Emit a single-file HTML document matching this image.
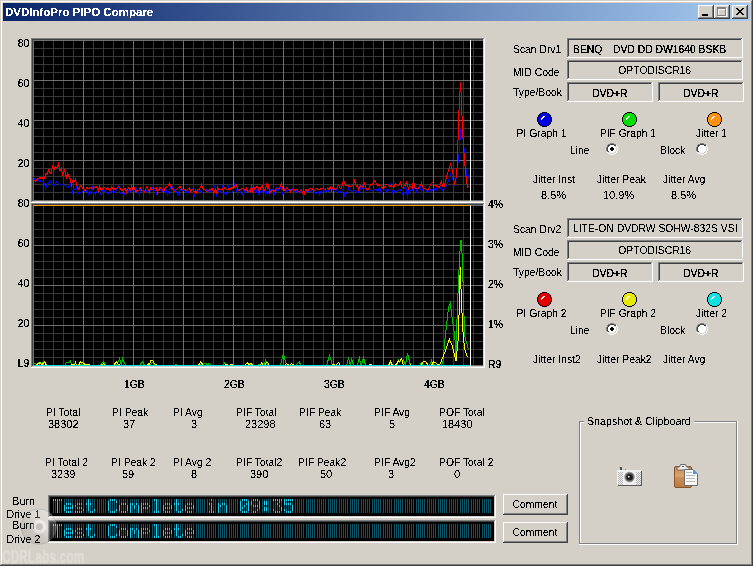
<!DOCTYPE html>
<html><head><meta charset="utf-8"><style>
html,body{margin:0;padding:0;}
body{width:753px;height:566px;overflow:hidden;background:#d4d0c8;position:relative;font-family:"Liberation Sans",sans-serif;font-size:11px;}
.t{position:absolute;line-height:12px;white-space:pre;color:#000;}
.r{position:absolute;}
.c{filter:url(#crisp);}
.c2{filter:url(#crisp2);}
svg{position:absolute;left:0;top:0;}
</style></head><body>
<svg width="0" height="0" style="position:absolute"><filter id="crisp" x="0" y="0" width="100%" height="100%"><feComponentTransfer><feFuncA type="discrete" tableValues="0 0 0 0 0 0 0 0 0 1 1 1 1 1 1 1 1 1 1 1"/></feComponentTransfer></filter><filter id="crisp2" x="0" y="0" width="100%" height="100%"><feComponentTransfer><feFuncA type="discrete" tableValues="0 0 0 0 0 0 1 1 1 1 1 1 1 1 1 1 1 1 1 1"/></feComponentTransfer></filter></svg>
<div class="r" style="left:0px;top:0px;width:753px;height:1px;background:#d4d0c8"></div>
<div class="r" style="left:0px;top:0px;width:1px;height:566px;background:#d4d0c8"></div>
<div class="r" style="left:1px;top:1px;width:751px;height:1px;background:#ffffff"></div>
<div class="r" style="left:1px;top:1px;width:1px;height:563px;background:#ffffff"></div>
<div class="r" style="left:752px;top:0px;width:1px;height:566px;background:#404040"></div>
<div class="r" style="left:0px;top:565px;width:753px;height:1px;background:#404040"></div>
<div class="r" style="left:751px;top:1px;width:1px;height:564px;background:#808080"></div>
<div class="r" style="left:1px;top:564px;width:751px;height:1px;background:#808080"></div>
<div class="r" style="left:3px;top:3px;width:747px;height:18px;background:linear-gradient(to right,#0a246a,#a6caf0)"></div>
<div class="t c" style="left:5px;top:6px;font-weight:bold;color:#fff;"><span style="display:inline-block;transform:scaleX(1.045);transform-origin:0 0">DVDInfoPro PIPO Compare</span></div>
<div class="r" style="left:698px;top:5px;width:16px;height:14px;background:#d4d0c8"></div>
<div class="r" style="left:698px;top:5px;width:16px;height:1px;background:#ffffff"></div>
<div class="r" style="left:698px;top:5px;width:1px;height:14px;background:#ffffff"></div>
<div class="r" style="left:698px;top:18px;width:16px;height:1px;background:#404040"></div>
<div class="r" style="left:713px;top:5px;width:1px;height:14px;background:#404040"></div>
<div class="r" style="left:699px;top:17px;width:14px;height:1px;background:#808080"></div>
<div class="r" style="left:712px;top:6px;width:1px;height:12px;background:#808080"></div>
<div class="r" style="left:714px;top:5px;width:16px;height:14px;background:#d4d0c8"></div>
<div class="r" style="left:714px;top:5px;width:16px;height:1px;background:#ffffff"></div>
<div class="r" style="left:714px;top:5px;width:1px;height:14px;background:#ffffff"></div>
<div class="r" style="left:714px;top:18px;width:16px;height:1px;background:#404040"></div>
<div class="r" style="left:729px;top:5px;width:1px;height:14px;background:#404040"></div>
<div class="r" style="left:715px;top:17px;width:14px;height:1px;background:#808080"></div>
<div class="r" style="left:728px;top:6px;width:1px;height:12px;background:#808080"></div>
<div class="r" style="left:732px;top:5px;width:16px;height:14px;background:#d4d0c8"></div>
<div class="r" style="left:732px;top:5px;width:16px;height:1px;background:#ffffff"></div>
<div class="r" style="left:732px;top:5px;width:1px;height:14px;background:#ffffff"></div>
<div class="r" style="left:732px;top:18px;width:16px;height:1px;background:#404040"></div>
<div class="r" style="left:747px;top:5px;width:1px;height:14px;background:#404040"></div>
<div class="r" style="left:733px;top:17px;width:14px;height:1px;background:#808080"></div>
<div class="r" style="left:746px;top:6px;width:1px;height:12px;background:#808080"></div>
<div class="r" style="left:702px;top:14px;width:6px;height:2px;background:#000"></div>
<div class="r" style="left:718px;top:8px;width:9px;height:2px;background:#fff"></div>
<div class="r" style="left:718px;top:8px;width:1px;height:9px;background:#fff"></div>
<div class="r" style="left:726px;top:8px;width:1px;height:9px;background:#fff"></div>
<div class="r" style="left:718px;top:16px;width:9px;height:1px;background:#fff"></div>
<div class="r" style="left:717px;top:7px;width:9px;height:2px;background:#808080"></div>
<div class="r" style="left:717px;top:7px;width:1px;height:9px;background:#808080"></div>
<div class="r" style="left:725px;top:7px;width:1px;height:9px;background:#808080"></div>
<div class="r" style="left:717px;top:15px;width:9px;height:1px;background:#808080"></div>
<div class="r" style="left:0;top:0"></div>
<div class="r" style="left:31px;top:38px;width:454px;height:1px;background:#808080"></div>
<div class="r" style="left:31px;top:38px;width:1px;height:165px;background:#808080"></div>
<div class="r" style="left:32px;top:39px;width:452px;height:1px;background:#404040"></div>
<div class="r" style="left:32px;top:39px;width:1px;height:163px;background:#404040"></div>
<div class="r" style="left:31px;top:202px;width:454px;height:1px;background:#ffffff"></div>
<div class="r" style="left:484px;top:38px;width:1px;height:165px;background:#ffffff"></div>
<div class="r" style="left:32px;top:201px;width:452px;height:1px;background:#d4d0c8"></div>
<div class="r" style="left:483px;top:39px;width:1px;height:163px;background:#d4d0c8"></div>
<div class="r" style="left:33px;top:40px;width:450px;height:161px;background:#000"></div>
<div class="r" style="left:31px;top:203px;width:454px;height:1px;background:#808080"></div>
<div class="r" style="left:31px;top:203px;width:1px;height:165px;background:#808080"></div>
<div class="r" style="left:32px;top:204px;width:452px;height:1px;background:#404040"></div>
<div class="r" style="left:32px;top:204px;width:1px;height:163px;background:#404040"></div>
<div class="r" style="left:31px;top:367px;width:454px;height:1px;background:#ffffff"></div>
<div class="r" style="left:484px;top:203px;width:1px;height:165px;background:#ffffff"></div>
<div class="r" style="left:32px;top:366px;width:452px;height:1px;background:#d4d0c8"></div>
<div class="r" style="left:483px;top:204px;width:1px;height:163px;background:#d4d0c8"></div>
<div class="r" style="left:33px;top:205px;width:450px;height:161px;background:#000"></div>
<svg width="753" height="566" shape-rendering="crispEdges"><rect x="43" y="40" width="1" height="161" fill="#383838"/><rect x="53" y="40" width="1" height="161" fill="#383838"/><rect x="63" y="40" width="1" height="161" fill="#383838"/><rect x="73" y="40" width="1" height="161" fill="#383838"/><rect x="93" y="40" width="1" height="161" fill="#383838"/><rect x="103" y="40" width="1" height="161" fill="#383838"/><rect x="113" y="40" width="1" height="161" fill="#383838"/><rect x="123" y="40" width="1" height="161" fill="#383838"/><rect x="143" y="40" width="1" height="161" fill="#383838"/><rect x="153" y="40" width="1" height="161" fill="#383838"/><rect x="163" y="40" width="1" height="161" fill="#383838"/><rect x="173" y="40" width="1" height="161" fill="#383838"/><rect x="193" y="40" width="1" height="161" fill="#383838"/><rect x="203" y="40" width="1" height="161" fill="#383838"/><rect x="213" y="40" width="1" height="161" fill="#383838"/><rect x="223" y="40" width="1" height="161" fill="#383838"/><rect x="243" y="40" width="1" height="161" fill="#383838"/><rect x="253" y="40" width="1" height="161" fill="#383838"/><rect x="263" y="40" width="1" height="161" fill="#383838"/><rect x="273" y="40" width="1" height="161" fill="#383838"/><rect x="293" y="40" width="1" height="161" fill="#383838"/><rect x="303" y="40" width="1" height="161" fill="#383838"/><rect x="313" y="40" width="1" height="161" fill="#383838"/><rect x="323" y="40" width="1" height="161" fill="#383838"/><rect x="343" y="40" width="1" height="161" fill="#383838"/><rect x="353" y="40" width="1" height="161" fill="#383838"/><rect x="363" y="40" width="1" height="161" fill="#383838"/><rect x="373" y="40" width="1" height="161" fill="#383838"/><rect x="393" y="40" width="1" height="161" fill="#383838"/><rect x="403" y="40" width="1" height="161" fill="#383838"/><rect x="413" y="40" width="1" height="161" fill="#383838"/><rect x="423" y="40" width="1" height="161" fill="#383838"/><rect x="443" y="40" width="1" height="161" fill="#383838"/><rect x="453" y="40" width="1" height="161" fill="#383838"/><rect x="463" y="40" width="1" height="161" fill="#383838"/><rect x="473" y="40" width="1" height="161" fill="#383838"/><rect x="33" y="48" width="450" height="1" fill="#383838"/><rect x="33" y="56" width="450" height="1" fill="#383838"/><rect x="33" y="64" width="450" height="1" fill="#383838"/><rect x="33" y="72" width="450" height="1" fill="#383838"/><rect x="33" y="88" width="450" height="1" fill="#383838"/><rect x="33" y="96" width="450" height="1" fill="#383838"/><rect x="33" y="104" width="450" height="1" fill="#383838"/><rect x="33" y="112" width="450" height="1" fill="#383838"/><rect x="33" y="128" width="450" height="1" fill="#383838"/><rect x="33" y="136" width="450" height="1" fill="#383838"/><rect x="33" y="144" width="450" height="1" fill="#383838"/><rect x="33" y="152" width="450" height="1" fill="#383838"/><rect x="33" y="168" width="450" height="1" fill="#383838"/><rect x="33" y="176" width="450" height="1" fill="#383838"/><rect x="33" y="184" width="450" height="1" fill="#383838"/><rect x="33" y="192" width="450" height="1" fill="#383838"/><rect x="33" y="40" width="1" height="161" fill="#707070"/><rect x="83" y="40" width="1" height="161" fill="#707070"/><rect x="133" y="40" width="1" height="161" fill="#707070"/><rect x="183" y="40" width="1" height="161" fill="#707070"/><rect x="233" y="40" width="1" height="161" fill="#707070"/><rect x="283" y="40" width="1" height="161" fill="#707070"/><rect x="333" y="40" width="1" height="161" fill="#707070"/><rect x="383" y="40" width="1" height="161" fill="#707070"/><rect x="433" y="40" width="1" height="161" fill="#707070"/><rect x="33" y="40" width="450" height="1" fill="#707070"/><rect x="33" y="80" width="450" height="1" fill="#707070"/><rect x="33" y="120" width="450" height="1" fill="#707070"/><rect x="33" y="160" width="450" height="1" fill="#707070"/><rect x="33" y="200" width="450" height="1" fill="#707070"/><rect x="43" y="205" width="1" height="161" fill="#383838"/><rect x="53" y="205" width="1" height="161" fill="#383838"/><rect x="63" y="205" width="1" height="161" fill="#383838"/><rect x="73" y="205" width="1" height="161" fill="#383838"/><rect x="93" y="205" width="1" height="161" fill="#383838"/><rect x="103" y="205" width="1" height="161" fill="#383838"/><rect x="113" y="205" width="1" height="161" fill="#383838"/><rect x="123" y="205" width="1" height="161" fill="#383838"/><rect x="143" y="205" width="1" height="161" fill="#383838"/><rect x="153" y="205" width="1" height="161" fill="#383838"/><rect x="163" y="205" width="1" height="161" fill="#383838"/><rect x="173" y="205" width="1" height="161" fill="#383838"/><rect x="193" y="205" width="1" height="161" fill="#383838"/><rect x="203" y="205" width="1" height="161" fill="#383838"/><rect x="213" y="205" width="1" height="161" fill="#383838"/><rect x="223" y="205" width="1" height="161" fill="#383838"/><rect x="243" y="205" width="1" height="161" fill="#383838"/><rect x="253" y="205" width="1" height="161" fill="#383838"/><rect x="263" y="205" width="1" height="161" fill="#383838"/><rect x="273" y="205" width="1" height="161" fill="#383838"/><rect x="293" y="205" width="1" height="161" fill="#383838"/><rect x="303" y="205" width="1" height="161" fill="#383838"/><rect x="313" y="205" width="1" height="161" fill="#383838"/><rect x="323" y="205" width="1" height="161" fill="#383838"/><rect x="343" y="205" width="1" height="161" fill="#383838"/><rect x="353" y="205" width="1" height="161" fill="#383838"/><rect x="363" y="205" width="1" height="161" fill="#383838"/><rect x="373" y="205" width="1" height="161" fill="#383838"/><rect x="393" y="205" width="1" height="161" fill="#383838"/><rect x="403" y="205" width="1" height="161" fill="#383838"/><rect x="413" y="205" width="1" height="161" fill="#383838"/><rect x="423" y="205" width="1" height="161" fill="#383838"/><rect x="443" y="205" width="1" height="161" fill="#383838"/><rect x="453" y="205" width="1" height="161" fill="#383838"/><rect x="463" y="205" width="1" height="161" fill="#383838"/><rect x="473" y="205" width="1" height="161" fill="#383838"/><rect x="33" y="213" width="450" height="1" fill="#383838"/><rect x="33" y="221" width="450" height="1" fill="#383838"/><rect x="33" y="229" width="450" height="1" fill="#383838"/><rect x="33" y="237" width="450" height="1" fill="#383838"/><rect x="33" y="253" width="450" height="1" fill="#383838"/><rect x="33" y="261" width="450" height="1" fill="#383838"/><rect x="33" y="269" width="450" height="1" fill="#383838"/><rect x="33" y="277" width="450" height="1" fill="#383838"/><rect x="33" y="293" width="450" height="1" fill="#383838"/><rect x="33" y="301" width="450" height="1" fill="#383838"/><rect x="33" y="309" width="450" height="1" fill="#383838"/><rect x="33" y="317" width="450" height="1" fill="#383838"/><rect x="33" y="333" width="450" height="1" fill="#383838"/><rect x="33" y="341" width="450" height="1" fill="#383838"/><rect x="33" y="349" width="450" height="1" fill="#383838"/><rect x="33" y="357" width="450" height="1" fill="#383838"/><rect x="33" y="205" width="1" height="161" fill="#707070"/><rect x="83" y="205" width="1" height="161" fill="#707070"/><rect x="133" y="205" width="1" height="161" fill="#707070"/><rect x="183" y="205" width="1" height="161" fill="#707070"/><rect x="233" y="205" width="1" height="161" fill="#707070"/><rect x="283" y="205" width="1" height="161" fill="#707070"/><rect x="333" y="205" width="1" height="161" fill="#707070"/><rect x="383" y="205" width="1" height="161" fill="#707070"/><rect x="433" y="205" width="1" height="161" fill="#707070"/><rect x="33" y="205" width="450" height="1" fill="#707070"/><rect x="33" y="245" width="450" height="1" fill="#707070"/><rect x="33" y="285" width="450" height="1" fill="#707070"/><rect x="33" y="325" width="450" height="1" fill="#707070"/><rect x="33" y="365" width="450" height="1" fill="#707070"/></svg>
<svg width="753" height="566"><g shape-rendering="crispEdges"><polyline points="33.5,177.5 35.5,180.5 37.5,179.5 38.5,179.5 39.5,181.5 41.5,180.5 42.5,181.5 44.5,183.5 45.5,188.5 46.5,186.5 48.5,182.5 50.5,180.5 51.5,185.5 52.5,184.5 54.5,185.5 56.5,181.5 58.5,183.5 59.5,184.5 61.5,184.5 63.5,184.5 65.5,186.5 67.5,186.5 68.5,187.5 69.5,185.5 70.5,183.5 72.5,192.5 73.5,189.5 75.5,189.5 76.5,185.5 77.5,194.5 79.5,191.5 80.5,192.5 81.5,192.5 83.5,190.5 85.5,191.5 87.5,190.5 88.5,193.5 89.5,190.5 90.5,192.5 92.5,186.5 93.5,193.5 94.5,192.5 95.5,194.5 96.5,191.5 97.5,190.5 98.5,190.5 100.5,194.5 101.5,194.5 102.5,190.5 104.5,190.5 105.5,192.5 106.5,192.5 107.5,193.5 109.5,192.5 110.5,191.5 111.5,191.5 113.5,192.5 114.5,192.5 115.5,189.5 116.5,190.5 118.5,186.5 120.5,193.5 122.5,193.5 123.5,194.5 125.5,193.5 126.5,191.5 127.5,186.5 128.5,192.5 130.5,191.5 131.5,191.5 132.5,190.5 134.5,191.5 136.5,188.5 137.5,191.5 138.5,192.5 139.5,194.5 140.5,189.5 141.5,191.5 143.5,189.5 144.5,191.5 145.5,192.5 146.5,191.5 147.5,189.5 148.5,191.5 150.5,190.5 151.5,190.5 152.5,188.5 153.5,190.5 154.5,189.5 156.5,193.5 157.5,190.5 159.5,190.5 160.5,189.5 161.5,192.5 162.5,191.5 164.5,190.5 165.5,193.5 166.5,190.5 167.5,194.5 169.5,190.5 170.5,186.5 171.5,189.5 173.5,185.5 174.5,191.5 175.5,192.5 176.5,191.5 177.5,194.5 178.5,195.5 179.5,188.5 180.5,190.5 181.5,190.5 183.5,190.5 185.5,190.5 186.5,192.5 187.5,193.5 188.5,191.5 190.5,191.5 192.5,188.5 194.5,195.5 196.5,190.5 198.5,191.5 199.5,190.5 201.5,191.5 202.5,192.5 204.5,189.5 205.5,190.5 206.5,189.5 207.5,191.5 209.5,191.5 211.5,190.5 212.5,188.5 214.5,185.5 216.5,196.5 217.5,188.5 218.5,191.5 219.5,192.5 220.5,192.5 221.5,190.5 222.5,185.5 223.5,190.5 224.5,193.5 226.5,194.5 228.5,185.5 229.5,192.5 231.5,192.5 232.5,191.5 233.5,191.5 234.5,183.5 236.5,190.5 237.5,193.5 238.5,189.5 239.5,189.5 241.5,194.5 242.5,194.5 244.5,190.5 246.5,192.5 247.5,191.5 249.5,190.5 251.5,190.5 252.5,187.5 254.5,190.5 256.5,192.5 257.5,185.5 258.5,194.5 259.5,191.5 261.5,192.5 262.5,190.5 263.5,190.5 264.5,190.5 265.5,194.5 267.5,190.5 269.5,194.5 270.5,189.5 271.5,189.5 272.5,189.5 273.5,191.5 274.5,193.5 276.5,187.5 277.5,193.5 278.5,188.5 280.5,187.5 281.5,190.5 282.5,194.5 283.5,193.5 284.5,189.5 285.5,191.5 286.5,191.5 287.5,189.5 289.5,190.5 291.5,189.5 293.5,188.5 295.5,192.5 296.5,190.5 298.5,192.5 299.5,191.5 301.5,190.5 302.5,191.5 303.5,192.5 304.5,192.5 305.5,192.5 307.5,189.5 308.5,191.5 309.5,191.5 310.5,191.5 312.5,190.5 313.5,191.5 315.5,193.5 317.5,192.5 318.5,191.5 319.5,194.5 321.5,190.5 322.5,190.5 323.5,190.5 324.5,191.5 326.5,190.5 327.5,192.5 329.5,189.5 330.5,189.5 331.5,188.5 333.5,190.5 335.5,192.5 336.5,189.5 338.5,191.5 339.5,193.5 341.5,190.5 343.5,188.5 344.5,195.5 345.5,193.5 347.5,192.5 348.5,188.5 349.5,190.5 350.5,190.5 351.5,191.5 352.5,191.5 353.5,191.5 354.5,190.5 355.5,191.5 357.5,192.5 359.5,191.5 360.5,188.5 361.5,181.5 362.5,188.5 363.5,187.5 364.5,188.5 366.5,190.5 368.5,189.5 369.5,190.5 370.5,190.5 371.5,189.5 372.5,190.5 373.5,189.5 374.5,189.5 376.5,189.5 377.5,191.5 379.5,187.5 380.5,191.5 382.5,192.5 384.5,189.5 386.5,191.5 387.5,189.5 388.5,190.5 390.5,183.5 392.5,192.5 393.5,190.5 395.5,191.5 396.5,191.5 397.5,191.5 399.5,189.5 401.5,190.5 402.5,194.5 403.5,190.5 405.5,185.5 407.5,198.5 408.5,190.5 409.5,190.5 410.5,189.5 411.5,191.5 413.5,187.5 414.5,188.5 415.5,183.5 416.5,192.5 417.5,188.5 419.5,186.5 420.5,186.5 421.5,192.5 423.5,187.5 424.5,188.5 425.5,189.5 427.5,192.5 428.5,191.5 430.5,189.5 431.5,191.5 433.5,188.5 435.5,189.5 436.5,190.5 437.5,186.5 439.5,186.5 441.5,189.5 442.5,190.5 443.5,187.5 444.5,188.5 446.5,186.5 448.5,180.5 450.5,174.5 452.5,178.5 454.5,184.5 456.5,176.5 458.5,158.5 459.5,150.5 460.5,130.5 461.5,127.5 462.5,134.5 463.5,142.5 465.5,165.5 467.5,180.5 468.5,175.5" fill="none" stroke="#0000ff" stroke-width="1" stroke-linejoin="miter"/><polyline points="33.5,179.5 35.5,181.5 36.5,180.5 37.5,178.5 38.5,178.5 39.5,177.5 41.5,178.5 43.5,177.5 44.5,178.5 45.5,173.5 46.5,174.5 48.5,170.5 49.5,172.5 51.5,173.5 52.5,165.5 53.5,170.5 55.5,166.5 56.5,167.5 57.5,167.5 58.5,162.5 59.5,170.5 60.5,170.5 61.5,168.5 62.5,174.5 64.5,170.5 66.5,177.5 67.5,173.5 68.5,175.5 70.5,179.5 71.5,186.5 72.5,180.5 74.5,181.5 75.5,179.5 77.5,188.5 78.5,189.5 80.5,185.5 82.5,187.5 83.5,189.5 85.5,190.5 86.5,187.5 88.5,188.5 90.5,187.5 92.5,188.5 94.5,187.5 96.5,186.5 98.5,190.5 99.5,186.5 101.5,190.5 102.5,189.5 103.5,187.5 104.5,187.5 106.5,189.5 107.5,187.5 109.5,190.5 110.5,190.5 111.5,186.5 113.5,189.5 115.5,188.5 116.5,188.5 118.5,186.5 120.5,188.5 121.5,190.5 122.5,189.5 123.5,191.5 124.5,188.5 125.5,188.5 126.5,192.5 128.5,187.5 130.5,190.5 131.5,185.5 133.5,191.5 134.5,187.5 135.5,191.5 137.5,190.5 138.5,190.5 140.5,187.5 141.5,190.5 142.5,190.5 144.5,192.5 146.5,186.5 147.5,187.5 149.5,192.5 150.5,187.5 152.5,189.5 153.5,188.5 155.5,188.5 156.5,187.5 157.5,193.5 158.5,191.5 159.5,187.5 161.5,188.5 162.5,189.5 163.5,191.5 165.5,187.5 167.5,186.5 168.5,185.5 169.5,183.5 171.5,187.5 172.5,189.5 174.5,191.5 176.5,189.5 178.5,187.5 180.5,186.5 181.5,189.5 182.5,189.5 184.5,189.5 186.5,190.5 188.5,188.5 189.5,187.5 190.5,191.5 191.5,189.5 192.5,189.5 194.5,192.5 195.5,190.5 196.5,192.5 197.5,189.5 199.5,189.5 201.5,184.5 202.5,188.5 204.5,189.5 206.5,191.5 207.5,190.5 208.5,190.5 210.5,189.5 212.5,188.5 213.5,193.5 215.5,189.5 216.5,192.5 217.5,187.5 218.5,189.5 219.5,189.5 221.5,189.5 222.5,188.5 223.5,190.5 224.5,187.5 226.5,189.5 227.5,189.5 229.5,188.5 230.5,189.5 231.5,187.5 233.5,188.5 234.5,186.5 236.5,184.5 237.5,189.5 238.5,190.5 240.5,189.5 242.5,188.5 243.5,188.5 245.5,190.5 246.5,188.5 247.5,192.5 249.5,190.5 250.5,191.5 251.5,184.5 252.5,192.5 253.5,184.5 254.5,189.5 255.5,188.5 256.5,186.5 257.5,186.5 258.5,188.5 259.5,192.5 260.5,187.5 262.5,185.5 263.5,190.5 265.5,189.5 266.5,184.5 267.5,187.5 268.5,184.5 269.5,192.5 270.5,192.5 271.5,190.5 272.5,190.5 274.5,191.5 275.5,189.5 276.5,188.5 277.5,188.5 279.5,188.5 281.5,182.5 282.5,189.5 283.5,189.5 285.5,190.5 286.5,187.5 288.5,189.5 289.5,189.5 290.5,191.5 291.5,189.5 293.5,189.5 295.5,190.5 296.5,189.5 298.5,191.5 299.5,191.5 301.5,189.5 302.5,192.5 303.5,190.5 304.5,193.5 305.5,189.5 306.5,189.5 307.5,191.5 309.5,188.5 310.5,188.5 311.5,189.5 312.5,188.5 313.5,191.5 315.5,189.5 316.5,188.5 318.5,189.5 319.5,189.5 321.5,188.5 323.5,188.5 324.5,189.5 326.5,188.5 327.5,187.5 328.5,189.5 330.5,186.5 331.5,190.5 332.5,187.5 333.5,187.5 334.5,189.5 335.5,189.5 336.5,188.5 338.5,185.5 340.5,188.5 341.5,188.5 343.5,179.5 345.5,185.5 347.5,185.5 349.5,186.5 351.5,186.5 352.5,185.5 353.5,186.5 354.5,179.5 356.5,186.5 357.5,185.5 358.5,189.5 360.5,185.5 361.5,186.5 362.5,187.5 364.5,183.5 366.5,189.5 368.5,189.5 370.5,184.5 372.5,184.5 373.5,182.5 374.5,180.5 376.5,183.5 377.5,185.5 379.5,184.5 381.5,186.5 382.5,188.5 383.5,189.5 385.5,184.5 387.5,184.5 388.5,185.5 389.5,186.5 391.5,185.5 392.5,186.5 393.5,187.5 395.5,183.5 396.5,184.5 397.5,185.5 398.5,185.5 399.5,184.5 400.5,182.5 401.5,186.5 402.5,187.5 404.5,185.5 405.5,185.5 406.5,181.5 407.5,185.5 408.5,188.5 409.5,185.5 411.5,187.5 412.5,188.5 413.5,177.5 414.5,187.5 415.5,188.5 417.5,188.5 419.5,187.5 421.5,182.5 422.5,187.5 423.5,188.5 425.5,188.5 427.5,190.5 429.5,187.5 430.5,184.5 432.5,182.5 434.5,185.5 435.5,185.5 437.5,186.5 439.5,187.5 440.5,184.5 441.5,180.5 442.5,186.5 443.5,183.5 444.5,185.5 446.5,176.5 448.5,170.5 450.5,164.5 452.5,170.5 454.5,184.5 456.5,175.5 457.5,160.5 458.5,120.5 459.5,100.5 460.5,82.5 461.5,100.5 462.5,130.5 464.5,160.5 466.5,180.5 467.5,187.5 468.5,186.5" fill="none" stroke="#ff0000" stroke-width="1" stroke-linejoin="miter"/></g><rect x="33" y="205" width="437" height="1" fill="#ff9900"/><g shape-rendering="crispEdges"><polyline points="33.5,362.5 36.5,364.5 38.5,362.5 40.5,365.5 42.5,362.5 43.5,365.5 46.5,365.5 48.5,365.5 49.5,365.5 50.5,365.5 51.5,365.5 53.5,365.5 55.5,365.5 56.5,365.5 59.5,365.5 61.5,365.5 64.5,365.5 66.5,362.5 68.5,362.5 70.5,360.5 71.5,365.5 73.5,365.5 75.5,362.5 76.5,365.5 79.5,364.5 80.5,365.5 81.5,363.5 84.5,365.5 87.5,364.5 89.5,365.5 91.5,365.5 94.5,365.5 95.5,365.5 97.5,365.5 99.5,365.5 100.5,364.5 103.5,361.5 105.5,365.5 107.5,365.5 110.5,365.5 113.5,365.5 114.5,365.5 117.5,363.5 119.5,358.5 121.5,365.5 122.5,358.5 125.5,365.5 126.5,365.5 127.5,365.5 129.5,365.5 131.5,365.5 134.5,365.5 136.5,365.5 137.5,365.5 139.5,365.5 142.5,361.5 144.5,365.5 145.5,365.5 147.5,365.5 149.5,365.5 152.5,362.5 155.5,365.5 157.5,365.5 159.5,365.5 161.5,365.5 163.5,365.5 165.5,365.5 167.5,365.5 169.5,365.5 171.5,365.5 174.5,365.5 175.5,364.5 177.5,365.5 180.5,365.5 182.5,365.5 185.5,365.5 188.5,365.5 190.5,365.5 192.5,365.5 193.5,365.5 195.5,365.5 197.5,365.5 200.5,365.5 201.5,363.5 202.5,364.5 205.5,363.5 207.5,364.5 209.5,363.5 211.5,365.5 213.5,365.5 214.5,365.5 215.5,365.5 218.5,365.5 220.5,365.5 222.5,365.5 223.5,365.5 224.5,362.5 226.5,364.5 228.5,365.5 230.5,365.5 232.5,365.5 234.5,365.5 235.5,365.5 238.5,365.5 239.5,365.5 242.5,365.5 243.5,365.5 244.5,365.5 247.5,365.5 248.5,365.5 249.5,363.5 252.5,365.5 254.5,365.5 257.5,365.5 260.5,363.5 261.5,362.5 262.5,365.5 264.5,365.5 265.5,359.5 267.5,365.5 268.5,365.5 270.5,365.5 272.5,365.5 274.5,365.5 276.5,365.5 278.5,365.5 280.5,365.5 283.5,353.5 285.5,362.5 288.5,365.5 290.5,365.5 293.5,365.5 295.5,365.5 297.5,363.5 299.5,361.5 300.5,365.5 302.5,365.5 304.5,365.5 305.5,365.5 308.5,365.5 311.5,365.5 313.5,365.5 315.5,365.5 318.5,365.5 321.5,365.5 324.5,365.5 326.5,365.5 329.5,355.5 330.5,358.5 332.5,365.5 334.5,365.5 335.5,365.5 337.5,365.5 340.5,365.5 343.5,365.5 345.5,365.5 346.5,365.5 348.5,358.5 350.5,365.5 351.5,358.5 353.5,365.5 355.5,365.5 357.5,365.5 359.5,356.5 360.5,365.5 361.5,364.5 363.5,357.5 365.5,365.5 366.5,365.5 369.5,365.5 372.5,365.5 374.5,365.5 377.5,365.5 380.5,365.5 382.5,365.5 383.5,365.5 386.5,365.5 388.5,365.5 391.5,362.5 392.5,365.5 395.5,365.5 397.5,364.5 398.5,360.5 399.5,362.5 401.5,359.5 402.5,360.5 403.5,359.5 405.5,365.5 407.5,353.5 410.5,365.5 413.5,365.5 414.5,365.5 417.5,365.5 419.5,365.5 421.5,362.5 423.5,365.5 425.5,365.5 427.5,365.5 429.5,365.5 431.5,360.5 432.5,364.5 433.5,364.5 436.5,365.5 437.5,365.5 440.5,365.5 441.5,365.5 443.0,361.0 445.0,339.0 448.6,307.0 450.3,303.0 452.3,319.0 454.8,336.0 456.0,358.0 457.2,312.0 459.7,255.0 461.0,240.0 462.2,255.0 463.4,294.0 464.6,336.0 467.0,344.0 468.4,349.0" fill="none" stroke="#00c000" stroke-width="1" stroke-linejoin="miter"/><polyline points="33.5,365.5 35.5,365.5 36.5,364.5 38.5,363.5 40.5,362.5 41.5,365.5 44.5,361.5 46.5,365.5 48.5,365.5 50.5,365.5 52.5,365.5 54.5,365.5 56.5,365.5 58.5,365.5 60.5,365.5 61.5,365.5 64.5,365.5 67.5,365.5 70.5,365.5 72.5,364.5 74.5,365.5 75.5,362.5 76.5,365.5 78.5,365.5 80.5,361.5 83.5,363.5 85.5,364.5 88.5,364.5 90.5,365.5 91.5,365.5 94.5,365.5 96.5,365.5 99.5,365.5 100.5,365.5 103.5,363.5 105.5,365.5 106.5,365.5 109.5,365.5 110.5,365.5 112.5,365.5 113.5,365.5 116.5,361.5 117.5,363.5 120.5,365.5 122.5,365.5 124.5,365.5 126.5,365.5 128.5,365.5 129.5,365.5 132.5,365.5 134.5,365.5 137.5,365.5 140.5,365.5 143.5,365.5 144.5,365.5 146.5,365.5 148.5,363.5 149.5,365.5 150.5,360.5 152.5,360.5 154.5,363.5 155.5,364.5 158.5,365.5 161.5,365.5 163.5,365.5 164.5,365.5 166.5,365.5 169.5,365.5 170.5,365.5 172.5,365.5 175.5,365.5 177.5,365.5 178.5,365.5 180.5,365.5 183.5,365.5 186.5,365.5 187.5,365.5 190.5,365.5 192.5,365.5 195.5,365.5 197.5,365.5 199.5,364.5 200.5,361.5 203.5,365.5 206.5,365.5 208.5,365.5 210.5,365.5 213.5,365.5 215.5,365.5 217.5,365.5 219.5,365.5 221.5,365.5 223.5,365.5 226.5,364.5 229.5,365.5 231.5,364.5 233.5,365.5 235.5,365.5 237.5,365.5 238.5,365.5 241.5,365.5 242.5,365.5 244.5,365.5 247.5,362.5 248.5,364.5 251.5,363.5 252.5,365.5 254.5,365.5 256.5,365.5 258.5,365.5 260.5,365.5 261.5,362.5 263.5,365.5 264.5,365.5 266.5,362.5 267.5,362.5 269.5,365.5 271.5,365.5 274.5,365.5 276.5,365.5 277.5,365.5 278.5,365.5 279.5,365.5 281.5,365.5 282.5,365.5 284.5,365.5 286.5,363.5 289.5,365.5 291.5,363.5 294.5,365.5 296.5,365.5 298.5,365.5 301.5,365.5 303.5,365.5 305.5,365.5 308.5,365.5 310.5,365.5 311.5,365.5 314.5,365.5 317.5,365.5 319.5,365.5 321.5,365.5 323.5,365.5 325.5,365.5 327.5,365.5 330.5,365.5 333.5,364.5 335.5,365.5 338.5,362.5 340.5,365.5 341.5,365.5 343.5,365.5 346.5,365.5 348.5,365.5 351.5,365.5 354.5,365.5 357.5,365.5 359.5,365.5 361.5,365.5 364.5,365.5 365.5,365.5 368.5,365.5 369.5,364.5 370.5,364.5 372.5,365.5 374.5,365.5 376.5,365.5 377.5,365.5 380.5,365.5 381.5,365.5 382.5,365.5 385.5,365.5 388.5,365.5 390.5,361.5 392.5,365.5 394.5,365.5 396.5,364.5 398.5,360.5 399.5,361.5 401.5,358.5 403.5,365.5 404.5,365.5 406.5,365.5 407.5,365.5 408.5,365.5 409.5,365.5 410.5,364.5 411.5,365.5 413.5,365.5 414.5,365.5 416.5,365.5 418.5,365.5 420.5,365.5 423.5,361.5 425.5,361.5 428.5,365.5 431.5,365.5 432.5,363.5 433.5,361.5 436.5,363.5 439.5,365.5 441.0,362.0 444.9,352.0 449.3,339.0 452.3,346.0 456.0,361.0 458.5,336.0 460.2,267.0 461.2,294.0 462.7,329.0 464.6,349.0 467.0,356.0 468.4,357.5" fill="none" stroke="#ffff00" stroke-width="1" stroke-linejoin="miter"/></g><rect x="33" y="365" width="437" height="1" fill="#00e0e0"/><rect x="470" y="40" width="1" height="161" fill="#ffffff"/><rect x="470" y="205" width="1" height="161" fill="#ffffff"/></svg>
<div class="t c" style="left:0px;top:37px;width:29px;text-align:right;filter:url(#crisp2)"><span style="display:inline-block;transform:scaleX(0.94);transform-origin:100% 0">80</span></div>
<div class="t c" style="left:0px;top:77px;width:29px;text-align:right;filter:url(#crisp2)"><span style="display:inline-block;transform:scaleX(0.94);transform-origin:100% 0">60</span></div>
<div class="t c" style="left:0px;top:117px;width:29px;text-align:right;filter:url(#crisp2)"><span style="display:inline-block;transform:scaleX(0.94);transform-origin:100% 0">40</span></div>
<div class="t c" style="left:0px;top:157px;width:29px;text-align:right;filter:url(#crisp2)"><span style="display:inline-block;transform:scaleX(0.94);transform-origin:100% 0">20</span></div>
<div class="t c" style="left:0px;top:197px;width:29px;text-align:right;filter:url(#crisp2)"><span style="display:inline-block;transform:scaleX(0.94);transform-origin:100% 0">80</span></div>
<div class="t c" style="left:0px;top:237px;width:29px;text-align:right;filter:url(#crisp2)"><span style="display:inline-block;transform:scaleX(0.94);transform-origin:100% 0">60</span></div>
<div class="t c" style="left:0px;top:277px;width:29px;text-align:right;filter:url(#crisp2)"><span style="display:inline-block;transform:scaleX(0.94);transform-origin:100% 0">40</span></div>
<div class="t c" style="left:0px;top:317px;width:29px;text-align:right;filter:url(#crisp2)"><span style="display:inline-block;transform:scaleX(0.94);transform-origin:100% 0">20</span></div>
<div class="t c" style="left:0px;top:357px;width:29px;text-align:right;filter:url(#crisp2)"><span style="display:inline-block;transform:scaleX(0.94);transform-origin:100% 0">L9</span></div>
<div class="t c" style="left:488px;top:198px;filter:url(#crisp2)"><span style="display:inline-block;transform:scaleX(0.94);transform-origin:0 0">4%</span></div>
<div class="t c" style="left:488px;top:238px;filter:url(#crisp2)"><span style="display:inline-block;transform:scaleX(0.94);transform-origin:0 0">3%</span></div>
<div class="t c" style="left:488px;top:278px;filter:url(#crisp2)"><span style="display:inline-block;transform:scaleX(0.94);transform-origin:0 0">2%</span></div>
<div class="t c" style="left:488px;top:318px;filter:url(#crisp2)"><span style="display:inline-block;transform:scaleX(0.94);transform-origin:0 0">1%</span></div>
<div class="t c" style="left:488px;top:358px;filter:url(#crisp2)"><span style="display:inline-block;transform:scaleX(0.94);transform-origin:0 0">R9</span></div>
<div class="t c" style="left:124px;top:378px;filter:url(#crisp2)"><span style="display:inline-block;transform:scaleX(0.94);transform-origin:0 0">1GB</span></div>
<div class="t c" style="left:224px;top:378px;filter:url(#crisp2)"><span style="display:inline-block;transform:scaleX(0.94);transform-origin:0 0">2GB</span></div>
<div class="t c" style="left:324px;top:378px;filter:url(#crisp2)"><span style="display:inline-block;transform:scaleX(0.94);transform-origin:0 0">3GB</span></div>
<div class="t c" style="left:424px;top:378px;filter:url(#crisp2)"><span style="display:inline-block;transform:scaleX(0.94);transform-origin:0 0">4GB</span></div>
<div class="t c" style="left:46px;top:406px;"><span style="display:inline-block;transform:scaleX(0.94);transform-origin:0 0">PI Total</span></div>
<div class="t c" style="left:48px;top:418px;"><span style="display:inline-block;transform:scaleX(1.0);transform-origin:0 0">38302</span></div>
<div class="t c" style="left:112px;top:406px;"><span style="display:inline-block;transform:scaleX(0.94);transform-origin:0 0">PI Peak</span></div>
<div class="t c" style="left:123px;top:418px;"><span style="display:inline-block;transform:scaleX(1.0);transform-origin:0 0">37</span></div>
<div class="t c" style="left:173px;top:406px;"><span style="display:inline-block;transform:scaleX(0.94);transform-origin:0 0">PI Avg</span></div>
<div class="t c" style="left:191px;top:418px;"><span style="display:inline-block;transform:scaleX(1.0);transform-origin:0 0">3</span></div>
<div class="t c" style="left:236px;top:406px;"><span style="display:inline-block;transform:scaleX(0.94);transform-origin:0 0">PIF Total</span></div>
<div class="t c" style="left:245px;top:418px;"><span style="display:inline-block;transform:scaleX(1.0);transform-origin:0 0">23298</span></div>
<div class="t c" style="left:299px;top:406px;"><span style="display:inline-block;transform:scaleX(0.94);transform-origin:0 0">PIF Peak</span></div>
<div class="t c" style="left:319px;top:418px;"><span style="display:inline-block;transform:scaleX(1.0);transform-origin:0 0">63</span></div>
<div class="t c" style="left:374px;top:406px;"><span style="display:inline-block;transform:scaleX(0.94);transform-origin:0 0">PIF Avg</span></div>
<div class="t c" style="left:389px;top:418px;"><span style="display:inline-block;transform:scaleX(1.0);transform-origin:0 0">5</span></div>
<div class="t c" style="left:439px;top:406px;"><span style="display:inline-block;transform:scaleX(0.94);transform-origin:0 0">POF Total</span></div>
<div class="t c" style="left:442px;top:418px;"><span style="display:inline-block;transform:scaleX(1.0);transform-origin:0 0">18430</span></div>
<div class="t c" style="left:45px;top:456px;"><span style="display:inline-block;transform:scaleX(0.94);transform-origin:0 0">PI Total 2</span></div>
<div class="t c" style="left:51px;top:468px;"><span style="display:inline-block;transform:scaleX(1.0);transform-origin:0 0">3239</span></div>
<div class="t c" style="left:111px;top:456px;"><span style="display:inline-block;transform:scaleX(0.94);transform-origin:0 0">PI Peak 2</span></div>
<div class="t c" style="left:122px;top:468px;"><span style="display:inline-block;transform:scaleX(1.0);transform-origin:0 0">59</span></div>
<div class="t c" style="left:173px;top:456px;"><span style="display:inline-block;transform:scaleX(0.94);transform-origin:0 0">PI Avg 2</span></div>
<div class="t c" style="left:191px;top:468px;"><span style="display:inline-block;transform:scaleX(1.0);transform-origin:0 0">8</span></div>
<div class="t c" style="left:236px;top:456px;"><span style="display:inline-block;transform:scaleX(0.94);transform-origin:0 0">PIF Total2</span></div>
<div class="t c" style="left:250px;top:468px;"><span style="display:inline-block;transform:scaleX(1.0);transform-origin:0 0">390</span></div>
<div class="t c" style="left:298px;top:456px;"><span style="display:inline-block;transform:scaleX(0.94);transform-origin:0 0">PIF Peak2</span></div>
<div class="t c" style="left:320px;top:468px;"><span style="display:inline-block;transform:scaleX(1.0);transform-origin:0 0">50</span></div>
<div class="t c" style="left:374px;top:456px;"><span style="display:inline-block;transform:scaleX(0.94);transform-origin:0 0">PIF Avg2</span></div>
<div class="t c" style="left:388px;top:468px;"><span style="display:inline-block;transform:scaleX(1.0);transform-origin:0 0">3</span></div>
<div class="t c" style="left:439px;top:456px;"><span style="display:inline-block;transform:scaleX(0.94);transform-origin:0 0">POF Total 2</span></div>
<div class="t c" style="left:454px;top:468px;"><span style="display:inline-block;transform:scaleX(1.0);transform-origin:0 0">0</span></div>
<svg width="753" height="566" shape-rendering="crispEdges"><path d="M736 8h1v1h-1zM737 8h1v1h-1zM742 8h1v1h-1zM743 8h1v1h-1zM737 9h1v1h-1zM738 9h1v1h-1zM741 9h1v1h-1zM742 9h1v1h-1zM738 10h1v1h-1zM739 10h1v1h-1zM740 10h1v1h-1zM741 10h1v1h-1zM739 11h1v1h-1zM740 11h1v1h-1zM738 12h1v1h-1zM739 12h1v1h-1zM740 12h1v1h-1zM741 12h1v1h-1zM737 13h1v1h-1zM738 13h1v1h-1zM741 13h1v1h-1zM742 13h1v1h-1zM736 14h1v1h-1zM737 14h1v1h-1zM742 14h1v1h-1zM743 14h1v1h-1z" fill="#000"/></svg>
<div class="t c" style="left:513px;top:43px;"><span style="display:inline-block;transform:scaleX(0.94);transform-origin:0 0">Scan Drv1</span></div>
<div class="t c" style="left:513px;top:66px;"><span style="display:inline-block;transform:scaleX(0.94);transform-origin:0 0">MID Code</span></div>
<div class="t c" style="left:513px;top:86px;"><span style="display:inline-block;transform:scaleX(0.94);transform-origin:0 0">Type/Book</span></div>
<div class="r" style="left:567px;top:38px;width:176px;height:1px;background:#808080"></div>
<div class="r" style="left:567px;top:38px;width:1px;height:20px;background:#808080"></div>
<div class="r" style="left:568px;top:39px;width:174px;height:1px;background:#404040"></div>
<div class="r" style="left:568px;top:39px;width:1px;height:18px;background:#404040"></div>
<div class="r" style="left:567px;top:57px;width:176px;height:1px;background:#ffffff"></div>
<div class="r" style="left:742px;top:38px;width:1px;height:20px;background:#ffffff"></div>
<div class="r" style="left:568px;top:56px;width:174px;height:1px;background:#d4d0c8"></div>
<div class="r" style="left:741px;top:39px;width:1px;height:18px;background:#d4d0c8"></div>
<div class="r" style="left:567px;top:60px;width:176px;height:1px;background:#808080"></div>
<div class="r" style="left:567px;top:60px;width:1px;height:20px;background:#808080"></div>
<div class="r" style="left:568px;top:61px;width:174px;height:1px;background:#404040"></div>
<div class="r" style="left:568px;top:61px;width:1px;height:18px;background:#404040"></div>
<div class="r" style="left:567px;top:79px;width:176px;height:1px;background:#ffffff"></div>
<div class="r" style="left:742px;top:60px;width:1px;height:20px;background:#ffffff"></div>
<div class="r" style="left:568px;top:78px;width:174px;height:1px;background:#d4d0c8"></div>
<div class="r" style="left:741px;top:61px;width:1px;height:18px;background:#d4d0c8"></div>
<div class="r" style="left:567px;top:82px;width:86px;height:1px;background:#808080"></div>
<div class="r" style="left:567px;top:82px;width:1px;height:20px;background:#808080"></div>
<div class="r" style="left:568px;top:83px;width:84px;height:1px;background:#404040"></div>
<div class="r" style="left:568px;top:83px;width:1px;height:18px;background:#404040"></div>
<div class="r" style="left:567px;top:101px;width:86px;height:1px;background:#ffffff"></div>
<div class="r" style="left:652px;top:82px;width:1px;height:20px;background:#ffffff"></div>
<div class="r" style="left:568px;top:100px;width:84px;height:1px;background:#d4d0c8"></div>
<div class="r" style="left:651px;top:83px;width:1px;height:18px;background:#d4d0c8"></div>
<div class="r" style="left:658px;top:82px;width:86px;height:1px;background:#808080"></div>
<div class="r" style="left:658px;top:82px;width:1px;height:20px;background:#808080"></div>
<div class="r" style="left:659px;top:83px;width:84px;height:1px;background:#404040"></div>
<div class="r" style="left:659px;top:83px;width:1px;height:18px;background:#404040"></div>
<div class="r" style="left:658px;top:101px;width:86px;height:1px;background:#ffffff"></div>
<div class="r" style="left:743px;top:82px;width:1px;height:20px;background:#ffffff"></div>
<div class="r" style="left:659px;top:100px;width:84px;height:1px;background:#d4d0c8"></div>
<div class="r" style="left:742px;top:83px;width:1px;height:18px;background:#d4d0c8"></div>
<div class="t c" style="left:573px;top:43px;filter:url(#crisp2)"><span style="display:inline-block;transform:scaleX(0.94);transform-origin:0 0">BENQ</span></div>
<div class="t c" style="left:613px;top:43px;filter:url(#crisp2)"><span style="display:inline-block;transform:scaleX(0.94);transform-origin:0 0">DVD DD DW1640 BSKB</span></div>
<div class="t c" style="left:554.5px;top:64px;width:200px;text-align:center;"><span style="display:inline-block;transform:scaleX(0.94);transform-origin:50% 0">OPTODISCR16</span></div>
<div class="t c" style="left:509.5px;top:87px;width:200px;text-align:center;filter:url(#crisp2)"><span style="display:inline-block;transform:scaleX(0.94);transform-origin:50% 0">DVD+R</span></div>
<div class="t c" style="left:600.5px;top:87px;width:200px;text-align:center;filter:url(#crisp2)"><span style="display:inline-block;transform:scaleX(0.94);transform-origin:50% 0">DVD+R</span></div>
<svg width="753" height="566" shape-rendering="crispEdges"><path d="M542 112h1v1h-1zM543 112h1v1h-1zM544 112h1v1h-1zM545 112h1v1h-1zM546 112h1v1h-1zM540 113h1v1h-1zM541 113h1v1h-1zM547 113h1v1h-1zM548 113h1v1h-1zM539 114h1v1h-1zM549 114h1v1h-1zM538 115h1v1h-1zM550 115h1v1h-1zM538 116h1v1h-1zM550 116h1v1h-1zM537 117h1v1h-1zM551 117h1v1h-1zM537 118h1v1h-1zM551 118h1v1h-1zM537 119h1v1h-1zM551 119h1v1h-1zM537 120h1v1h-1zM551 120h1v1h-1zM537 121h1v1h-1zM551 121h1v1h-1zM538 122h1v1h-1zM550 122h1v1h-1zM538 123h1v1h-1zM550 123h1v1h-1zM539 124h1v1h-1zM549 124h1v1h-1zM540 125h1v1h-1zM541 125h1v1h-1zM547 125h1v1h-1zM548 125h1v1h-1zM542 126h1v1h-1zM543 126h1v1h-1zM544 126h1v1h-1zM545 126h1v1h-1zM546 126h1v1h-1z" fill="#000"/><path d="M542 113h1v1h-1zM543 113h1v1h-1zM544 113h1v1h-1zM545 113h1v1h-1zM546 113h1v1h-1zM540 114h1v1h-1zM541 114h1v1h-1zM542 114h1v1h-1zM543 114h1v1h-1zM544 114h1v1h-1zM545 114h1v1h-1zM546 114h1v1h-1zM547 114h1v1h-1zM548 114h1v1h-1zM539 115h1v1h-1zM540 115h1v1h-1zM541 115h1v1h-1zM542 115h1v1h-1zM543 115h1v1h-1zM544 115h1v1h-1zM545 115h1v1h-1zM546 115h1v1h-1zM547 115h1v1h-1zM548 115h1v1h-1zM549 115h1v1h-1zM539 116h1v1h-1zM540 116h1v1h-1zM541 116h1v1h-1zM542 116h1v1h-1zM545 116h1v1h-1zM546 116h1v1h-1zM547 116h1v1h-1zM548 116h1v1h-1zM549 116h1v1h-1zM538 117h1v1h-1zM539 117h1v1h-1zM540 117h1v1h-1zM541 117h1v1h-1zM544 117h1v1h-1zM545 117h1v1h-1zM546 117h1v1h-1zM547 117h1v1h-1zM548 117h1v1h-1zM549 117h1v1h-1zM550 117h1v1h-1zM538 118h1v1h-1zM539 118h1v1h-1zM540 118h1v1h-1zM543 118h1v1h-1zM544 118h1v1h-1zM545 118h1v1h-1zM546 118h1v1h-1zM547 118h1v1h-1zM548 118h1v1h-1zM549 118h1v1h-1zM550 118h1v1h-1zM538 119h1v1h-1zM539 119h1v1h-1zM540 119h1v1h-1zM542 119h1v1h-1zM543 119h1v1h-1zM544 119h1v1h-1zM545 119h1v1h-1zM546 119h1v1h-1zM547 119h1v1h-1zM548 119h1v1h-1zM549 119h1v1h-1zM550 119h1v1h-1zM538 120h1v1h-1zM539 120h1v1h-1zM540 120h1v1h-1zM541 120h1v1h-1zM542 120h1v1h-1zM543 120h1v1h-1zM544 120h1v1h-1zM545 120h1v1h-1zM546 120h1v1h-1zM547 120h1v1h-1zM548 120h1v1h-1zM549 120h1v1h-1zM550 120h1v1h-1zM538 121h1v1h-1zM539 121h1v1h-1zM540 121h1v1h-1zM541 121h1v1h-1zM542 121h1v1h-1zM543 121h1v1h-1zM544 121h1v1h-1zM545 121h1v1h-1zM546 121h1v1h-1zM547 121h1v1h-1zM548 121h1v1h-1zM549 121h1v1h-1zM550 121h1v1h-1zM539 122h1v1h-1zM540 122h1v1h-1zM541 122h1v1h-1zM542 122h1v1h-1zM543 122h1v1h-1zM544 122h1v1h-1zM545 122h1v1h-1zM546 122h1v1h-1zM547 122h1v1h-1zM548 122h1v1h-1zM549 122h1v1h-1zM539 123h1v1h-1zM540 123h1v1h-1zM541 123h1v1h-1zM542 123h1v1h-1zM543 123h1v1h-1zM544 123h1v1h-1zM545 123h1v1h-1zM546 123h1v1h-1zM547 123h1v1h-1zM548 123h1v1h-1zM549 123h1v1h-1zM540 124h1v1h-1zM541 124h1v1h-1zM542 124h1v1h-1zM543 124h1v1h-1zM544 124h1v1h-1zM545 124h1v1h-1zM546 124h1v1h-1zM547 124h1v1h-1zM548 124h1v1h-1zM542 125h1v1h-1zM543 125h1v1h-1zM544 125h1v1h-1zM545 125h1v1h-1zM546 125h1v1h-1z" fill="#0000e0"/><path d="M543 116h1v1h-1zM544 116h1v1h-1zM542 117h1v1h-1zM543 117h1v1h-1zM541 118h1v1h-1zM542 118h1v1h-1zM541 119h1v1h-1z" fill="#fff"/></svg>
<div class="t c" style="left:442.0px;top:127px;width:200px;text-align:center;"><span style="display:inline-block;transform:scaleX(0.94);transform-origin:50% 0">PI Graph 1</span></div>
<svg width="753" height="566" shape-rendering="crispEdges"><path d="M627 112h1v1h-1zM628 112h1v1h-1zM629 112h1v1h-1zM630 112h1v1h-1zM631 112h1v1h-1zM625 113h1v1h-1zM626 113h1v1h-1zM632 113h1v1h-1zM633 113h1v1h-1zM624 114h1v1h-1zM634 114h1v1h-1zM623 115h1v1h-1zM635 115h1v1h-1zM623 116h1v1h-1zM635 116h1v1h-1zM622 117h1v1h-1zM636 117h1v1h-1zM622 118h1v1h-1zM636 118h1v1h-1zM622 119h1v1h-1zM636 119h1v1h-1zM622 120h1v1h-1zM636 120h1v1h-1zM622 121h1v1h-1zM636 121h1v1h-1zM623 122h1v1h-1zM635 122h1v1h-1zM623 123h1v1h-1zM635 123h1v1h-1zM624 124h1v1h-1zM634 124h1v1h-1zM625 125h1v1h-1zM626 125h1v1h-1zM632 125h1v1h-1zM633 125h1v1h-1zM627 126h1v1h-1zM628 126h1v1h-1zM629 126h1v1h-1zM630 126h1v1h-1zM631 126h1v1h-1z" fill="#000"/><path d="M627 113h1v1h-1zM628 113h1v1h-1zM629 113h1v1h-1zM630 113h1v1h-1zM631 113h1v1h-1zM625 114h1v1h-1zM626 114h1v1h-1zM627 114h1v1h-1zM628 114h1v1h-1zM629 114h1v1h-1zM630 114h1v1h-1zM631 114h1v1h-1zM632 114h1v1h-1zM633 114h1v1h-1zM624 115h1v1h-1zM625 115h1v1h-1zM626 115h1v1h-1zM627 115h1v1h-1zM628 115h1v1h-1zM629 115h1v1h-1zM630 115h1v1h-1zM631 115h1v1h-1zM632 115h1v1h-1zM633 115h1v1h-1zM634 115h1v1h-1zM624 116h1v1h-1zM625 116h1v1h-1zM626 116h1v1h-1zM627 116h1v1h-1zM630 116h1v1h-1zM631 116h1v1h-1zM632 116h1v1h-1zM633 116h1v1h-1zM634 116h1v1h-1zM623 117h1v1h-1zM624 117h1v1h-1zM625 117h1v1h-1zM626 117h1v1h-1zM629 117h1v1h-1zM630 117h1v1h-1zM631 117h1v1h-1zM632 117h1v1h-1zM633 117h1v1h-1zM634 117h1v1h-1zM635 117h1v1h-1zM623 118h1v1h-1zM624 118h1v1h-1zM625 118h1v1h-1zM628 118h1v1h-1zM629 118h1v1h-1zM630 118h1v1h-1zM631 118h1v1h-1zM632 118h1v1h-1zM633 118h1v1h-1zM634 118h1v1h-1zM635 118h1v1h-1zM623 119h1v1h-1zM624 119h1v1h-1zM625 119h1v1h-1zM627 119h1v1h-1zM628 119h1v1h-1zM629 119h1v1h-1zM630 119h1v1h-1zM631 119h1v1h-1zM632 119h1v1h-1zM633 119h1v1h-1zM634 119h1v1h-1zM635 119h1v1h-1zM623 120h1v1h-1zM624 120h1v1h-1zM625 120h1v1h-1zM626 120h1v1h-1zM627 120h1v1h-1zM628 120h1v1h-1zM629 120h1v1h-1zM630 120h1v1h-1zM631 120h1v1h-1zM632 120h1v1h-1zM633 120h1v1h-1zM634 120h1v1h-1zM635 120h1v1h-1zM623 121h1v1h-1zM624 121h1v1h-1zM625 121h1v1h-1zM626 121h1v1h-1zM627 121h1v1h-1zM628 121h1v1h-1zM629 121h1v1h-1zM630 121h1v1h-1zM631 121h1v1h-1zM632 121h1v1h-1zM633 121h1v1h-1zM634 121h1v1h-1zM635 121h1v1h-1zM624 122h1v1h-1zM625 122h1v1h-1zM626 122h1v1h-1zM627 122h1v1h-1zM628 122h1v1h-1zM629 122h1v1h-1zM630 122h1v1h-1zM631 122h1v1h-1zM632 122h1v1h-1zM633 122h1v1h-1zM634 122h1v1h-1zM624 123h1v1h-1zM625 123h1v1h-1zM626 123h1v1h-1zM627 123h1v1h-1zM628 123h1v1h-1zM629 123h1v1h-1zM630 123h1v1h-1zM631 123h1v1h-1zM632 123h1v1h-1zM633 123h1v1h-1zM634 123h1v1h-1zM625 124h1v1h-1zM626 124h1v1h-1zM627 124h1v1h-1zM628 124h1v1h-1zM629 124h1v1h-1zM630 124h1v1h-1zM631 124h1v1h-1zM632 124h1v1h-1zM633 124h1v1h-1zM627 125h1v1h-1zM628 125h1v1h-1zM629 125h1v1h-1zM630 125h1v1h-1zM631 125h1v1h-1z" fill="#00e000"/><path d="M628 116h1v1h-1zM629 116h1v1h-1zM627 117h1v1h-1zM628 117h1v1h-1zM626 118h1v1h-1zM627 118h1v1h-1zM626 119h1v1h-1z" fill="#fff"/></svg>
<div class="t c" style="left:527.6px;top:127px;width:200px;text-align:center;"><span style="display:inline-block;transform:scaleX(0.94);transform-origin:50% 0">PIF Graph 1</span></div>
<svg width="753" height="566" shape-rendering="crispEdges"><path d="M712 112h1v1h-1zM713 112h1v1h-1zM714 112h1v1h-1zM715 112h1v1h-1zM716 112h1v1h-1zM710 113h1v1h-1zM711 113h1v1h-1zM717 113h1v1h-1zM718 113h1v1h-1zM709 114h1v1h-1zM719 114h1v1h-1zM708 115h1v1h-1zM720 115h1v1h-1zM708 116h1v1h-1zM720 116h1v1h-1zM707 117h1v1h-1zM721 117h1v1h-1zM707 118h1v1h-1zM721 118h1v1h-1zM707 119h1v1h-1zM721 119h1v1h-1zM707 120h1v1h-1zM721 120h1v1h-1zM707 121h1v1h-1zM721 121h1v1h-1zM708 122h1v1h-1zM720 122h1v1h-1zM708 123h1v1h-1zM720 123h1v1h-1zM709 124h1v1h-1zM719 124h1v1h-1zM710 125h1v1h-1zM711 125h1v1h-1zM717 125h1v1h-1zM718 125h1v1h-1zM712 126h1v1h-1zM713 126h1v1h-1zM714 126h1v1h-1zM715 126h1v1h-1zM716 126h1v1h-1z" fill="#000"/><path d="M712 113h1v1h-1zM713 113h1v1h-1zM714 113h1v1h-1zM715 113h1v1h-1zM716 113h1v1h-1zM710 114h1v1h-1zM711 114h1v1h-1zM712 114h1v1h-1zM713 114h1v1h-1zM714 114h1v1h-1zM715 114h1v1h-1zM716 114h1v1h-1zM717 114h1v1h-1zM718 114h1v1h-1zM709 115h1v1h-1zM710 115h1v1h-1zM711 115h1v1h-1zM712 115h1v1h-1zM713 115h1v1h-1zM714 115h1v1h-1zM715 115h1v1h-1zM716 115h1v1h-1zM717 115h1v1h-1zM718 115h1v1h-1zM719 115h1v1h-1zM709 116h1v1h-1zM710 116h1v1h-1zM711 116h1v1h-1zM712 116h1v1h-1zM715 116h1v1h-1zM716 116h1v1h-1zM717 116h1v1h-1zM718 116h1v1h-1zM719 116h1v1h-1zM708 117h1v1h-1zM709 117h1v1h-1zM710 117h1v1h-1zM711 117h1v1h-1zM714 117h1v1h-1zM715 117h1v1h-1zM716 117h1v1h-1zM717 117h1v1h-1zM718 117h1v1h-1zM719 117h1v1h-1zM720 117h1v1h-1zM708 118h1v1h-1zM709 118h1v1h-1zM710 118h1v1h-1zM713 118h1v1h-1zM714 118h1v1h-1zM715 118h1v1h-1zM716 118h1v1h-1zM717 118h1v1h-1zM718 118h1v1h-1zM719 118h1v1h-1zM720 118h1v1h-1zM708 119h1v1h-1zM709 119h1v1h-1zM710 119h1v1h-1zM712 119h1v1h-1zM713 119h1v1h-1zM714 119h1v1h-1zM715 119h1v1h-1zM716 119h1v1h-1zM717 119h1v1h-1zM718 119h1v1h-1zM719 119h1v1h-1zM720 119h1v1h-1zM708 120h1v1h-1zM709 120h1v1h-1zM710 120h1v1h-1zM711 120h1v1h-1zM712 120h1v1h-1zM713 120h1v1h-1zM714 120h1v1h-1zM715 120h1v1h-1zM716 120h1v1h-1zM717 120h1v1h-1zM718 120h1v1h-1zM719 120h1v1h-1zM720 120h1v1h-1zM708 121h1v1h-1zM709 121h1v1h-1zM710 121h1v1h-1zM711 121h1v1h-1zM712 121h1v1h-1zM713 121h1v1h-1zM714 121h1v1h-1zM715 121h1v1h-1zM716 121h1v1h-1zM717 121h1v1h-1zM718 121h1v1h-1zM719 121h1v1h-1zM720 121h1v1h-1zM709 122h1v1h-1zM710 122h1v1h-1zM711 122h1v1h-1zM712 122h1v1h-1zM713 122h1v1h-1zM714 122h1v1h-1zM715 122h1v1h-1zM716 122h1v1h-1zM717 122h1v1h-1zM718 122h1v1h-1zM719 122h1v1h-1zM709 123h1v1h-1zM710 123h1v1h-1zM711 123h1v1h-1zM712 123h1v1h-1zM713 123h1v1h-1zM714 123h1v1h-1zM715 123h1v1h-1zM716 123h1v1h-1zM717 123h1v1h-1zM718 123h1v1h-1zM719 123h1v1h-1zM710 124h1v1h-1zM711 124h1v1h-1zM712 124h1v1h-1zM713 124h1v1h-1zM714 124h1v1h-1zM715 124h1v1h-1zM716 124h1v1h-1zM717 124h1v1h-1zM718 124h1v1h-1zM712 125h1v1h-1zM713 125h1v1h-1zM714 125h1v1h-1zM715 125h1v1h-1zM716 125h1v1h-1z" fill="#ff9010"/><path d="M713 116h1v1h-1zM714 116h1v1h-1zM712 117h1v1h-1zM713 117h1v1h-1zM711 118h1v1h-1zM712 118h1v1h-1zM711 119h1v1h-1z" fill="#fff"/></svg>
<div class="t c" style="left:612.0px;top:127px;width:200px;text-align:center;"><span style="display:inline-block;transform:scaleX(0.94);transform-origin:50% 0">Jitter 1</span></div>
<div class="t c" style="left:570px;top:144px;"><span style="display:inline-block;transform:scaleX(0.94);transform-origin:0 0">Line</span></div>
<div class="t c" style="left:660px;top:144px;"><span style="display:inline-block;transform:scaleX(0.94);transform-origin:0 0">Block</span></div>
<svg width="753" height="566" shape-rendering="crispEdges"><path d="M610 143h1v1h-1zM611 143h1v1h-1zM612 143h1v1h-1zM613 143h1v1h-1zM608 144h1v1h-1zM609 144h1v1h-1zM614 144h1v1h-1zM615 144h1v1h-1zM607 145h1v1h-1zM607 146h1v1h-1zM606 147h1v1h-1zM606 148h1v1h-1zM606 149h1v1h-1zM606 150h1v1h-1zM607 151h1v1h-1z" fill="#808080"/><path d="M610 144h1v1h-1zM611 144h1v1h-1zM612 144h1v1h-1zM613 144h1v1h-1zM608 145h1v1h-1zM609 145h1v1h-1zM614 145h1v1h-1zM615 145h1v1h-1zM608 146h1v1h-1zM607 147h1v1h-1zM607 148h1v1h-1zM607 149h1v1h-1zM607 150h1v1h-1zM608 151h1v1h-1z" fill="#404040"/><path d="M610 145h1v1h-1zM611 145h1v1h-1zM612 145h1v1h-1zM613 145h1v1h-1zM616 145h1v1h-1zM609 146h1v1h-1zM610 146h1v1h-1zM611 146h1v1h-1zM612 146h1v1h-1zM613 146h1v1h-1zM614 146h1v1h-1zM616 146h1v1h-1zM608 147h1v1h-1zM609 147h1v1h-1zM610 147h1v1h-1zM613 147h1v1h-1zM614 147h1v1h-1zM615 147h1v1h-1zM617 147h1v1h-1zM608 148h1v1h-1zM609 148h1v1h-1zM614 148h1v1h-1zM615 148h1v1h-1zM617 148h1v1h-1zM608 149h1v1h-1zM609 149h1v1h-1zM614 149h1v1h-1zM615 149h1v1h-1zM617 149h1v1h-1zM608 150h1v1h-1zM609 150h1v1h-1zM610 150h1v1h-1zM613 150h1v1h-1zM614 150h1v1h-1zM615 150h1v1h-1zM617 150h1v1h-1zM609 151h1v1h-1zM610 151h1v1h-1zM611 151h1v1h-1zM612 151h1v1h-1zM613 151h1v1h-1zM614 151h1v1h-1zM616 151h1v1h-1zM607 152h1v1h-1zM610 152h1v1h-1zM611 152h1v1h-1zM612 152h1v1h-1zM613 152h1v1h-1zM616 152h1v1h-1zM608 153h1v1h-1zM609 153h1v1h-1zM614 153h1v1h-1zM615 153h1v1h-1zM610 154h1v1h-1zM611 154h1v1h-1zM612 154h1v1h-1zM613 154h1v1h-1z" fill="#fff"/><path d="M615 146h1v1h-1zM616 147h1v1h-1zM616 148h1v1h-1zM616 149h1v1h-1zM616 150h1v1h-1zM615 151h1v1h-1zM608 152h1v1h-1zM609 152h1v1h-1zM614 152h1v1h-1zM615 152h1v1h-1zM610 153h1v1h-1zM611 153h1v1h-1zM612 153h1v1h-1zM613 153h1v1h-1z" fill="#d4d0c8"/><path d="M611 147h1v1h-1zM612 147h1v1h-1zM610 148h1v1h-1zM611 148h1v1h-1zM612 148h1v1h-1zM613 148h1v1h-1zM610 149h1v1h-1zM611 149h1v1h-1zM612 149h1v1h-1zM613 149h1v1h-1zM611 150h1v1h-1zM612 150h1v1h-1z" fill="#000"/></svg>
<svg width="753" height="566" shape-rendering="crispEdges"><path d="M700 143h1v1h-1zM701 143h1v1h-1zM702 143h1v1h-1zM703 143h1v1h-1zM698 144h1v1h-1zM699 144h1v1h-1zM704 144h1v1h-1zM705 144h1v1h-1zM697 145h1v1h-1zM697 146h1v1h-1zM696 147h1v1h-1zM696 148h1v1h-1zM696 149h1v1h-1zM696 150h1v1h-1zM697 151h1v1h-1z" fill="#808080"/><path d="M700 144h1v1h-1zM701 144h1v1h-1zM702 144h1v1h-1zM703 144h1v1h-1zM698 145h1v1h-1zM699 145h1v1h-1zM704 145h1v1h-1zM705 145h1v1h-1zM698 146h1v1h-1zM697 147h1v1h-1zM697 148h1v1h-1zM697 149h1v1h-1zM697 150h1v1h-1zM698 151h1v1h-1z" fill="#404040"/><path d="M700 145h1v1h-1zM701 145h1v1h-1zM702 145h1v1h-1zM703 145h1v1h-1zM706 145h1v1h-1zM699 146h1v1h-1zM700 146h1v1h-1zM701 146h1v1h-1zM702 146h1v1h-1zM703 146h1v1h-1zM704 146h1v1h-1zM706 146h1v1h-1zM698 147h1v1h-1zM699 147h1v1h-1zM700 147h1v1h-1zM701 147h1v1h-1zM702 147h1v1h-1zM703 147h1v1h-1zM704 147h1v1h-1zM705 147h1v1h-1zM707 147h1v1h-1zM698 148h1v1h-1zM699 148h1v1h-1zM700 148h1v1h-1zM701 148h1v1h-1zM702 148h1v1h-1zM703 148h1v1h-1zM704 148h1v1h-1zM705 148h1v1h-1zM707 148h1v1h-1zM698 149h1v1h-1zM699 149h1v1h-1zM700 149h1v1h-1zM701 149h1v1h-1zM702 149h1v1h-1zM703 149h1v1h-1zM704 149h1v1h-1zM705 149h1v1h-1zM707 149h1v1h-1zM698 150h1v1h-1zM699 150h1v1h-1zM700 150h1v1h-1zM701 150h1v1h-1zM702 150h1v1h-1zM703 150h1v1h-1zM704 150h1v1h-1zM705 150h1v1h-1zM707 150h1v1h-1zM699 151h1v1h-1zM700 151h1v1h-1zM701 151h1v1h-1zM702 151h1v1h-1zM703 151h1v1h-1zM704 151h1v1h-1zM706 151h1v1h-1zM697 152h1v1h-1zM700 152h1v1h-1zM701 152h1v1h-1zM702 152h1v1h-1zM703 152h1v1h-1zM706 152h1v1h-1zM698 153h1v1h-1zM699 153h1v1h-1zM704 153h1v1h-1zM705 153h1v1h-1zM700 154h1v1h-1zM701 154h1v1h-1zM702 154h1v1h-1zM703 154h1v1h-1z" fill="#fff"/><path d="M705 146h1v1h-1zM706 147h1v1h-1zM706 148h1v1h-1zM706 149h1v1h-1zM706 150h1v1h-1zM705 151h1v1h-1zM698 152h1v1h-1zM699 152h1v1h-1zM704 152h1v1h-1zM705 152h1v1h-1zM700 153h1v1h-1zM701 153h1v1h-1zM702 153h1v1h-1zM703 153h1v1h-1z" fill="#d4d0c8"/></svg>
<div class="t c" style="left:533px;top:173px;"><span style="display:inline-block;transform:scaleX(0.94);transform-origin:0 0">Jitter Inst</span></div>
<div class="t c" style="left:597px;top:173px;"><span style="display:inline-block;transform:scaleX(0.94);transform-origin:0 0">Jitter Peak</span></div>
<div class="t c" style="left:663px;top:173px;"><span style="display:inline-block;transform:scaleX(0.94);transform-origin:0 0">Jitter Avg</span></div>
<div class="t c" style="left:541px;top:189px;"><span style="display:inline-block;transform:scaleX(1.0);transform-origin:0 0">8.5%</span></div>
<div class="t c" style="left:603px;top:189px;"><span style="display:inline-block;transform:scaleX(1.0);transform-origin:0 0">10.9%</span></div>
<div class="t c" style="left:671px;top:189px;"><span style="display:inline-block;transform:scaleX(1.0);transform-origin:0 0">8.5%</span></div>
<div class="t c" style="left:513px;top:223px;"><span style="display:inline-block;transform:scaleX(0.94);transform-origin:0 0">Scan Drv2</span></div>
<div class="t c" style="left:513px;top:246px;"><span style="display:inline-block;transform:scaleX(0.94);transform-origin:0 0">MID Code</span></div>
<div class="t c" style="left:513px;top:266px;"><span style="display:inline-block;transform:scaleX(0.94);transform-origin:0 0">Type/Book</span></div>
<div class="r" style="left:567px;top:218px;width:176px;height:1px;background:#808080"></div>
<div class="r" style="left:567px;top:218px;width:1px;height:20px;background:#808080"></div>
<div class="r" style="left:568px;top:219px;width:174px;height:1px;background:#404040"></div>
<div class="r" style="left:568px;top:219px;width:1px;height:18px;background:#404040"></div>
<div class="r" style="left:567px;top:237px;width:176px;height:1px;background:#ffffff"></div>
<div class="r" style="left:742px;top:218px;width:1px;height:20px;background:#ffffff"></div>
<div class="r" style="left:568px;top:236px;width:174px;height:1px;background:#d4d0c8"></div>
<div class="r" style="left:741px;top:219px;width:1px;height:18px;background:#d4d0c8"></div>
<div class="r" style="left:567px;top:240px;width:176px;height:1px;background:#808080"></div>
<div class="r" style="left:567px;top:240px;width:1px;height:20px;background:#808080"></div>
<div class="r" style="left:568px;top:241px;width:174px;height:1px;background:#404040"></div>
<div class="r" style="left:568px;top:241px;width:1px;height:18px;background:#404040"></div>
<div class="r" style="left:567px;top:259px;width:176px;height:1px;background:#ffffff"></div>
<div class="r" style="left:742px;top:240px;width:1px;height:20px;background:#ffffff"></div>
<div class="r" style="left:568px;top:258px;width:174px;height:1px;background:#d4d0c8"></div>
<div class="r" style="left:741px;top:241px;width:1px;height:18px;background:#d4d0c8"></div>
<div class="r" style="left:567px;top:262px;width:86px;height:1px;background:#808080"></div>
<div class="r" style="left:567px;top:262px;width:1px;height:20px;background:#808080"></div>
<div class="r" style="left:568px;top:263px;width:84px;height:1px;background:#404040"></div>
<div class="r" style="left:568px;top:263px;width:1px;height:18px;background:#404040"></div>
<div class="r" style="left:567px;top:281px;width:86px;height:1px;background:#ffffff"></div>
<div class="r" style="left:652px;top:262px;width:1px;height:20px;background:#ffffff"></div>
<div class="r" style="left:568px;top:280px;width:84px;height:1px;background:#d4d0c8"></div>
<div class="r" style="left:651px;top:263px;width:1px;height:18px;background:#d4d0c8"></div>
<div class="r" style="left:658px;top:262px;width:86px;height:1px;background:#808080"></div>
<div class="r" style="left:658px;top:262px;width:1px;height:20px;background:#808080"></div>
<div class="r" style="left:659px;top:263px;width:84px;height:1px;background:#404040"></div>
<div class="r" style="left:659px;top:263px;width:1px;height:18px;background:#404040"></div>
<div class="r" style="left:658px;top:281px;width:86px;height:1px;background:#ffffff"></div>
<div class="r" style="left:743px;top:262px;width:1px;height:20px;background:#ffffff"></div>
<div class="r" style="left:659px;top:280px;width:84px;height:1px;background:#d4d0c8"></div>
<div class="r" style="left:742px;top:263px;width:1px;height:18px;background:#d4d0c8"></div>
<div class="r" style="left:569px;top:220px;width:171px;height:16px;overflow:hidden">
<div class="t c" style="left:4px;top:2px;"><span style="display:inline-block;transform:scaleX(0.94);transform-origin:0 0">LITE-ON DVDRW SOHW-832S VSI</span></div>
</div>
<div class="t c" style="left:554.5px;top:244px;width:200px;text-align:center;"><span style="display:inline-block;transform:scaleX(0.94);transform-origin:50% 0">OPTODISCR16</span></div>
<div class="t c" style="left:509.5px;top:267px;width:200px;text-align:center;filter:url(#crisp2)"><span style="display:inline-block;transform:scaleX(0.94);transform-origin:50% 0">DVD+R</span></div>
<div class="t c" style="left:600.5px;top:267px;width:200px;text-align:center;filter:url(#crisp2)"><span style="display:inline-block;transform:scaleX(0.94);transform-origin:50% 0">DVD+R</span></div>
<svg width="753" height="566" shape-rendering="crispEdges"><path d="M542 292h1v1h-1zM543 292h1v1h-1zM544 292h1v1h-1zM545 292h1v1h-1zM546 292h1v1h-1zM540 293h1v1h-1zM541 293h1v1h-1zM547 293h1v1h-1zM548 293h1v1h-1zM539 294h1v1h-1zM549 294h1v1h-1zM538 295h1v1h-1zM550 295h1v1h-1zM538 296h1v1h-1zM550 296h1v1h-1zM537 297h1v1h-1zM551 297h1v1h-1zM537 298h1v1h-1zM551 298h1v1h-1zM537 299h1v1h-1zM551 299h1v1h-1zM537 300h1v1h-1zM551 300h1v1h-1zM537 301h1v1h-1zM551 301h1v1h-1zM538 302h1v1h-1zM550 302h1v1h-1zM538 303h1v1h-1zM550 303h1v1h-1zM539 304h1v1h-1zM549 304h1v1h-1zM540 305h1v1h-1zM541 305h1v1h-1zM547 305h1v1h-1zM548 305h1v1h-1zM542 306h1v1h-1zM543 306h1v1h-1zM544 306h1v1h-1zM545 306h1v1h-1zM546 306h1v1h-1z" fill="#000"/><path d="M542 293h1v1h-1zM543 293h1v1h-1zM544 293h1v1h-1zM545 293h1v1h-1zM546 293h1v1h-1zM540 294h1v1h-1zM541 294h1v1h-1zM542 294h1v1h-1zM543 294h1v1h-1zM544 294h1v1h-1zM545 294h1v1h-1zM546 294h1v1h-1zM547 294h1v1h-1zM548 294h1v1h-1zM539 295h1v1h-1zM540 295h1v1h-1zM541 295h1v1h-1zM542 295h1v1h-1zM543 295h1v1h-1zM544 295h1v1h-1zM545 295h1v1h-1zM546 295h1v1h-1zM547 295h1v1h-1zM548 295h1v1h-1zM549 295h1v1h-1zM539 296h1v1h-1zM540 296h1v1h-1zM541 296h1v1h-1zM542 296h1v1h-1zM545 296h1v1h-1zM546 296h1v1h-1zM547 296h1v1h-1zM548 296h1v1h-1zM549 296h1v1h-1zM538 297h1v1h-1zM539 297h1v1h-1zM540 297h1v1h-1zM541 297h1v1h-1zM544 297h1v1h-1zM545 297h1v1h-1zM546 297h1v1h-1zM547 297h1v1h-1zM548 297h1v1h-1zM549 297h1v1h-1zM550 297h1v1h-1zM538 298h1v1h-1zM539 298h1v1h-1zM540 298h1v1h-1zM543 298h1v1h-1zM544 298h1v1h-1zM545 298h1v1h-1zM546 298h1v1h-1zM547 298h1v1h-1zM548 298h1v1h-1zM549 298h1v1h-1zM550 298h1v1h-1zM538 299h1v1h-1zM539 299h1v1h-1zM540 299h1v1h-1zM542 299h1v1h-1zM543 299h1v1h-1zM544 299h1v1h-1zM545 299h1v1h-1zM546 299h1v1h-1zM547 299h1v1h-1zM548 299h1v1h-1zM549 299h1v1h-1zM550 299h1v1h-1zM538 300h1v1h-1zM539 300h1v1h-1zM540 300h1v1h-1zM541 300h1v1h-1zM542 300h1v1h-1zM543 300h1v1h-1zM544 300h1v1h-1zM545 300h1v1h-1zM546 300h1v1h-1zM547 300h1v1h-1zM548 300h1v1h-1zM549 300h1v1h-1zM550 300h1v1h-1zM538 301h1v1h-1zM539 301h1v1h-1zM540 301h1v1h-1zM541 301h1v1h-1zM542 301h1v1h-1zM543 301h1v1h-1zM544 301h1v1h-1zM545 301h1v1h-1zM546 301h1v1h-1zM547 301h1v1h-1zM548 301h1v1h-1zM549 301h1v1h-1zM550 301h1v1h-1zM539 302h1v1h-1zM540 302h1v1h-1zM541 302h1v1h-1zM542 302h1v1h-1zM543 302h1v1h-1zM544 302h1v1h-1zM545 302h1v1h-1zM546 302h1v1h-1zM547 302h1v1h-1zM548 302h1v1h-1zM549 302h1v1h-1zM539 303h1v1h-1zM540 303h1v1h-1zM541 303h1v1h-1zM542 303h1v1h-1zM543 303h1v1h-1zM544 303h1v1h-1zM545 303h1v1h-1zM546 303h1v1h-1zM547 303h1v1h-1zM548 303h1v1h-1zM549 303h1v1h-1zM540 304h1v1h-1zM541 304h1v1h-1zM542 304h1v1h-1zM543 304h1v1h-1zM544 304h1v1h-1zM545 304h1v1h-1zM546 304h1v1h-1zM547 304h1v1h-1zM548 304h1v1h-1zM542 305h1v1h-1zM543 305h1v1h-1zM544 305h1v1h-1zM545 305h1v1h-1zM546 305h1v1h-1z" fill="#e00000"/><path d="M543 296h1v1h-1zM544 296h1v1h-1zM542 297h1v1h-1zM543 297h1v1h-1zM541 298h1v1h-1zM542 298h1v1h-1zM541 299h1v1h-1z" fill="#fff"/></svg>
<div class="t c" style="left:442.0px;top:307px;width:200px;text-align:center;"><span style="display:inline-block;transform:scaleX(0.94);transform-origin:50% 0">PI Graph 2</span></div>
<svg width="753" height="566" shape-rendering="crispEdges"><path d="M627 292h1v1h-1zM628 292h1v1h-1zM629 292h1v1h-1zM630 292h1v1h-1zM631 292h1v1h-1zM625 293h1v1h-1zM626 293h1v1h-1zM632 293h1v1h-1zM633 293h1v1h-1zM624 294h1v1h-1zM634 294h1v1h-1zM623 295h1v1h-1zM635 295h1v1h-1zM623 296h1v1h-1zM635 296h1v1h-1zM622 297h1v1h-1zM636 297h1v1h-1zM622 298h1v1h-1zM636 298h1v1h-1zM622 299h1v1h-1zM636 299h1v1h-1zM622 300h1v1h-1zM636 300h1v1h-1zM622 301h1v1h-1zM636 301h1v1h-1zM623 302h1v1h-1zM635 302h1v1h-1zM623 303h1v1h-1zM635 303h1v1h-1zM624 304h1v1h-1zM634 304h1v1h-1zM625 305h1v1h-1zM626 305h1v1h-1zM632 305h1v1h-1zM633 305h1v1h-1zM627 306h1v1h-1zM628 306h1v1h-1zM629 306h1v1h-1zM630 306h1v1h-1zM631 306h1v1h-1z" fill="#000"/><path d="M627 293h1v1h-1zM628 293h1v1h-1zM629 293h1v1h-1zM630 293h1v1h-1zM631 293h1v1h-1zM625 294h1v1h-1zM626 294h1v1h-1zM627 294h1v1h-1zM628 294h1v1h-1zM629 294h1v1h-1zM630 294h1v1h-1zM631 294h1v1h-1zM632 294h1v1h-1zM633 294h1v1h-1zM624 295h1v1h-1zM625 295h1v1h-1zM626 295h1v1h-1zM627 295h1v1h-1zM628 295h1v1h-1zM629 295h1v1h-1zM630 295h1v1h-1zM631 295h1v1h-1zM632 295h1v1h-1zM633 295h1v1h-1zM634 295h1v1h-1zM624 296h1v1h-1zM625 296h1v1h-1zM626 296h1v1h-1zM627 296h1v1h-1zM630 296h1v1h-1zM631 296h1v1h-1zM632 296h1v1h-1zM633 296h1v1h-1zM634 296h1v1h-1zM623 297h1v1h-1zM624 297h1v1h-1zM625 297h1v1h-1zM626 297h1v1h-1zM629 297h1v1h-1zM630 297h1v1h-1zM631 297h1v1h-1zM632 297h1v1h-1zM633 297h1v1h-1zM634 297h1v1h-1zM635 297h1v1h-1zM623 298h1v1h-1zM624 298h1v1h-1zM625 298h1v1h-1zM628 298h1v1h-1zM629 298h1v1h-1zM630 298h1v1h-1zM631 298h1v1h-1zM632 298h1v1h-1zM633 298h1v1h-1zM634 298h1v1h-1zM635 298h1v1h-1zM623 299h1v1h-1zM624 299h1v1h-1zM625 299h1v1h-1zM627 299h1v1h-1zM628 299h1v1h-1zM629 299h1v1h-1zM630 299h1v1h-1zM631 299h1v1h-1zM632 299h1v1h-1zM633 299h1v1h-1zM634 299h1v1h-1zM635 299h1v1h-1zM623 300h1v1h-1zM624 300h1v1h-1zM625 300h1v1h-1zM626 300h1v1h-1zM627 300h1v1h-1zM628 300h1v1h-1zM629 300h1v1h-1zM630 300h1v1h-1zM631 300h1v1h-1zM632 300h1v1h-1zM633 300h1v1h-1zM634 300h1v1h-1zM635 300h1v1h-1zM623 301h1v1h-1zM624 301h1v1h-1zM625 301h1v1h-1zM626 301h1v1h-1zM627 301h1v1h-1zM628 301h1v1h-1zM629 301h1v1h-1zM630 301h1v1h-1zM631 301h1v1h-1zM632 301h1v1h-1zM633 301h1v1h-1zM634 301h1v1h-1zM635 301h1v1h-1zM624 302h1v1h-1zM625 302h1v1h-1zM626 302h1v1h-1zM627 302h1v1h-1zM628 302h1v1h-1zM629 302h1v1h-1zM630 302h1v1h-1zM631 302h1v1h-1zM632 302h1v1h-1zM633 302h1v1h-1zM634 302h1v1h-1zM624 303h1v1h-1zM625 303h1v1h-1zM626 303h1v1h-1zM627 303h1v1h-1zM628 303h1v1h-1zM629 303h1v1h-1zM630 303h1v1h-1zM631 303h1v1h-1zM632 303h1v1h-1zM633 303h1v1h-1zM634 303h1v1h-1zM625 304h1v1h-1zM626 304h1v1h-1zM627 304h1v1h-1zM628 304h1v1h-1zM629 304h1v1h-1zM630 304h1v1h-1zM631 304h1v1h-1zM632 304h1v1h-1zM633 304h1v1h-1zM627 305h1v1h-1zM628 305h1v1h-1zM629 305h1v1h-1zM630 305h1v1h-1zM631 305h1v1h-1z" fill="#e8e800"/><path d="M628 296h1v1h-1zM629 296h1v1h-1zM627 297h1v1h-1zM628 297h1v1h-1zM626 298h1v1h-1zM627 298h1v1h-1zM626 299h1v1h-1z" fill="#fff"/></svg>
<div class="t c" style="left:527.6px;top:307px;width:200px;text-align:center;"><span style="display:inline-block;transform:scaleX(0.94);transform-origin:50% 0">PIF Graph 2</span></div>
<svg width="753" height="566" shape-rendering="crispEdges"><path d="M712 292h1v1h-1zM713 292h1v1h-1zM714 292h1v1h-1zM715 292h1v1h-1zM716 292h1v1h-1zM710 293h1v1h-1zM711 293h1v1h-1zM717 293h1v1h-1zM718 293h1v1h-1zM709 294h1v1h-1zM719 294h1v1h-1zM708 295h1v1h-1zM720 295h1v1h-1zM708 296h1v1h-1zM720 296h1v1h-1zM707 297h1v1h-1zM721 297h1v1h-1zM707 298h1v1h-1zM721 298h1v1h-1zM707 299h1v1h-1zM721 299h1v1h-1zM707 300h1v1h-1zM721 300h1v1h-1zM707 301h1v1h-1zM721 301h1v1h-1zM708 302h1v1h-1zM720 302h1v1h-1zM708 303h1v1h-1zM720 303h1v1h-1zM709 304h1v1h-1zM719 304h1v1h-1zM710 305h1v1h-1zM711 305h1v1h-1zM717 305h1v1h-1zM718 305h1v1h-1zM712 306h1v1h-1zM713 306h1v1h-1zM714 306h1v1h-1zM715 306h1v1h-1zM716 306h1v1h-1z" fill="#000"/><path d="M712 293h1v1h-1zM713 293h1v1h-1zM714 293h1v1h-1zM715 293h1v1h-1zM716 293h1v1h-1zM710 294h1v1h-1zM711 294h1v1h-1zM712 294h1v1h-1zM713 294h1v1h-1zM714 294h1v1h-1zM715 294h1v1h-1zM716 294h1v1h-1zM717 294h1v1h-1zM718 294h1v1h-1zM709 295h1v1h-1zM710 295h1v1h-1zM711 295h1v1h-1zM712 295h1v1h-1zM713 295h1v1h-1zM714 295h1v1h-1zM715 295h1v1h-1zM716 295h1v1h-1zM717 295h1v1h-1zM718 295h1v1h-1zM719 295h1v1h-1zM709 296h1v1h-1zM710 296h1v1h-1zM711 296h1v1h-1zM712 296h1v1h-1zM715 296h1v1h-1zM716 296h1v1h-1zM717 296h1v1h-1zM718 296h1v1h-1zM719 296h1v1h-1zM708 297h1v1h-1zM709 297h1v1h-1zM710 297h1v1h-1zM711 297h1v1h-1zM714 297h1v1h-1zM715 297h1v1h-1zM716 297h1v1h-1zM717 297h1v1h-1zM718 297h1v1h-1zM719 297h1v1h-1zM720 297h1v1h-1zM708 298h1v1h-1zM709 298h1v1h-1zM710 298h1v1h-1zM713 298h1v1h-1zM714 298h1v1h-1zM715 298h1v1h-1zM716 298h1v1h-1zM717 298h1v1h-1zM718 298h1v1h-1zM719 298h1v1h-1zM720 298h1v1h-1zM708 299h1v1h-1zM709 299h1v1h-1zM710 299h1v1h-1zM712 299h1v1h-1zM713 299h1v1h-1zM714 299h1v1h-1zM715 299h1v1h-1zM716 299h1v1h-1zM717 299h1v1h-1zM718 299h1v1h-1zM719 299h1v1h-1zM720 299h1v1h-1zM708 300h1v1h-1zM709 300h1v1h-1zM710 300h1v1h-1zM711 300h1v1h-1zM712 300h1v1h-1zM713 300h1v1h-1zM714 300h1v1h-1zM715 300h1v1h-1zM716 300h1v1h-1zM717 300h1v1h-1zM718 300h1v1h-1zM719 300h1v1h-1zM720 300h1v1h-1zM708 301h1v1h-1zM709 301h1v1h-1zM710 301h1v1h-1zM711 301h1v1h-1zM712 301h1v1h-1zM713 301h1v1h-1zM714 301h1v1h-1zM715 301h1v1h-1zM716 301h1v1h-1zM717 301h1v1h-1zM718 301h1v1h-1zM719 301h1v1h-1zM720 301h1v1h-1zM709 302h1v1h-1zM710 302h1v1h-1zM711 302h1v1h-1zM712 302h1v1h-1zM713 302h1v1h-1zM714 302h1v1h-1zM715 302h1v1h-1zM716 302h1v1h-1zM717 302h1v1h-1zM718 302h1v1h-1zM719 302h1v1h-1zM709 303h1v1h-1zM710 303h1v1h-1zM711 303h1v1h-1zM712 303h1v1h-1zM713 303h1v1h-1zM714 303h1v1h-1zM715 303h1v1h-1zM716 303h1v1h-1zM717 303h1v1h-1zM718 303h1v1h-1zM719 303h1v1h-1zM710 304h1v1h-1zM711 304h1v1h-1zM712 304h1v1h-1zM713 304h1v1h-1zM714 304h1v1h-1zM715 304h1v1h-1zM716 304h1v1h-1zM717 304h1v1h-1zM718 304h1v1h-1zM712 305h1v1h-1zM713 305h1v1h-1zM714 305h1v1h-1zM715 305h1v1h-1zM716 305h1v1h-1z" fill="#10e0e0"/><path d="M713 296h1v1h-1zM714 296h1v1h-1zM712 297h1v1h-1zM713 297h1v1h-1zM711 298h1v1h-1zM712 298h1v1h-1zM711 299h1v1h-1z" fill="#fff"/></svg>
<div class="t c" style="left:612.0px;top:307px;width:200px;text-align:center;"><span style="display:inline-block;transform:scaleX(0.94);transform-origin:50% 0">Jitter 2</span></div>
<div class="t c" style="left:570px;top:324px;"><span style="display:inline-block;transform:scaleX(0.94);transform-origin:0 0">Line</span></div>
<div class="t c" style="left:660px;top:324px;"><span style="display:inline-block;transform:scaleX(0.94);transform-origin:0 0">Block</span></div>
<svg width="753" height="566" shape-rendering="crispEdges"><path d="M610 323h1v1h-1zM611 323h1v1h-1zM612 323h1v1h-1zM613 323h1v1h-1zM608 324h1v1h-1zM609 324h1v1h-1zM614 324h1v1h-1zM615 324h1v1h-1zM607 325h1v1h-1zM607 326h1v1h-1zM606 327h1v1h-1zM606 328h1v1h-1zM606 329h1v1h-1zM606 330h1v1h-1zM607 331h1v1h-1z" fill="#808080"/><path d="M610 324h1v1h-1zM611 324h1v1h-1zM612 324h1v1h-1zM613 324h1v1h-1zM608 325h1v1h-1zM609 325h1v1h-1zM614 325h1v1h-1zM615 325h1v1h-1zM608 326h1v1h-1zM607 327h1v1h-1zM607 328h1v1h-1zM607 329h1v1h-1zM607 330h1v1h-1zM608 331h1v1h-1z" fill="#404040"/><path d="M610 325h1v1h-1zM611 325h1v1h-1zM612 325h1v1h-1zM613 325h1v1h-1zM616 325h1v1h-1zM609 326h1v1h-1zM610 326h1v1h-1zM611 326h1v1h-1zM612 326h1v1h-1zM613 326h1v1h-1zM614 326h1v1h-1zM616 326h1v1h-1zM608 327h1v1h-1zM609 327h1v1h-1zM610 327h1v1h-1zM613 327h1v1h-1zM614 327h1v1h-1zM615 327h1v1h-1zM617 327h1v1h-1zM608 328h1v1h-1zM609 328h1v1h-1zM614 328h1v1h-1zM615 328h1v1h-1zM617 328h1v1h-1zM608 329h1v1h-1zM609 329h1v1h-1zM614 329h1v1h-1zM615 329h1v1h-1zM617 329h1v1h-1zM608 330h1v1h-1zM609 330h1v1h-1zM610 330h1v1h-1zM613 330h1v1h-1zM614 330h1v1h-1zM615 330h1v1h-1zM617 330h1v1h-1zM609 331h1v1h-1zM610 331h1v1h-1zM611 331h1v1h-1zM612 331h1v1h-1zM613 331h1v1h-1zM614 331h1v1h-1zM616 331h1v1h-1zM607 332h1v1h-1zM610 332h1v1h-1zM611 332h1v1h-1zM612 332h1v1h-1zM613 332h1v1h-1zM616 332h1v1h-1zM608 333h1v1h-1zM609 333h1v1h-1zM614 333h1v1h-1zM615 333h1v1h-1zM610 334h1v1h-1zM611 334h1v1h-1zM612 334h1v1h-1zM613 334h1v1h-1z" fill="#fff"/><path d="M615 326h1v1h-1zM616 327h1v1h-1zM616 328h1v1h-1zM616 329h1v1h-1zM616 330h1v1h-1zM615 331h1v1h-1zM608 332h1v1h-1zM609 332h1v1h-1zM614 332h1v1h-1zM615 332h1v1h-1zM610 333h1v1h-1zM611 333h1v1h-1zM612 333h1v1h-1zM613 333h1v1h-1z" fill="#d4d0c8"/><path d="M611 327h1v1h-1zM612 327h1v1h-1zM610 328h1v1h-1zM611 328h1v1h-1zM612 328h1v1h-1zM613 328h1v1h-1zM610 329h1v1h-1zM611 329h1v1h-1zM612 329h1v1h-1zM613 329h1v1h-1zM611 330h1v1h-1zM612 330h1v1h-1z" fill="#000"/></svg>
<svg width="753" height="566" shape-rendering="crispEdges"><path d="M700 323h1v1h-1zM701 323h1v1h-1zM702 323h1v1h-1zM703 323h1v1h-1zM698 324h1v1h-1zM699 324h1v1h-1zM704 324h1v1h-1zM705 324h1v1h-1zM697 325h1v1h-1zM697 326h1v1h-1zM696 327h1v1h-1zM696 328h1v1h-1zM696 329h1v1h-1zM696 330h1v1h-1zM697 331h1v1h-1z" fill="#808080"/><path d="M700 324h1v1h-1zM701 324h1v1h-1zM702 324h1v1h-1zM703 324h1v1h-1zM698 325h1v1h-1zM699 325h1v1h-1zM704 325h1v1h-1zM705 325h1v1h-1zM698 326h1v1h-1zM697 327h1v1h-1zM697 328h1v1h-1zM697 329h1v1h-1zM697 330h1v1h-1zM698 331h1v1h-1z" fill="#404040"/><path d="M700 325h1v1h-1zM701 325h1v1h-1zM702 325h1v1h-1zM703 325h1v1h-1zM706 325h1v1h-1zM699 326h1v1h-1zM700 326h1v1h-1zM701 326h1v1h-1zM702 326h1v1h-1zM703 326h1v1h-1zM704 326h1v1h-1zM706 326h1v1h-1zM698 327h1v1h-1zM699 327h1v1h-1zM700 327h1v1h-1zM701 327h1v1h-1zM702 327h1v1h-1zM703 327h1v1h-1zM704 327h1v1h-1zM705 327h1v1h-1zM707 327h1v1h-1zM698 328h1v1h-1zM699 328h1v1h-1zM700 328h1v1h-1zM701 328h1v1h-1zM702 328h1v1h-1zM703 328h1v1h-1zM704 328h1v1h-1zM705 328h1v1h-1zM707 328h1v1h-1zM698 329h1v1h-1zM699 329h1v1h-1zM700 329h1v1h-1zM701 329h1v1h-1zM702 329h1v1h-1zM703 329h1v1h-1zM704 329h1v1h-1zM705 329h1v1h-1zM707 329h1v1h-1zM698 330h1v1h-1zM699 330h1v1h-1zM700 330h1v1h-1zM701 330h1v1h-1zM702 330h1v1h-1zM703 330h1v1h-1zM704 330h1v1h-1zM705 330h1v1h-1zM707 330h1v1h-1zM699 331h1v1h-1zM700 331h1v1h-1zM701 331h1v1h-1zM702 331h1v1h-1zM703 331h1v1h-1zM704 331h1v1h-1zM706 331h1v1h-1zM697 332h1v1h-1zM700 332h1v1h-1zM701 332h1v1h-1zM702 332h1v1h-1zM703 332h1v1h-1zM706 332h1v1h-1zM698 333h1v1h-1zM699 333h1v1h-1zM704 333h1v1h-1zM705 333h1v1h-1zM700 334h1v1h-1zM701 334h1v1h-1zM702 334h1v1h-1zM703 334h1v1h-1z" fill="#fff"/><path d="M705 326h1v1h-1zM706 327h1v1h-1zM706 328h1v1h-1zM706 329h1v1h-1zM706 330h1v1h-1zM705 331h1v1h-1zM698 332h1v1h-1zM699 332h1v1h-1zM704 332h1v1h-1zM705 332h1v1h-1zM700 333h1v1h-1zM701 333h1v1h-1zM702 333h1v1h-1zM703 333h1v1h-1z" fill="#d4d0c8"/></svg>
<div class="t c" style="left:533px;top:353px;"><span style="display:inline-block;transform:scaleX(0.94);transform-origin:0 0">Jitter Inst2</span></div>
<div class="t c" style="left:597px;top:353px;"><span style="display:inline-block;transform:scaleX(0.94);transform-origin:0 0">Jitter Peak2</span></div>
<div class="t c" style="left:663px;top:353px;"><span style="display:inline-block;transform:scaleX(0.94);transform-origin:0 0">Jitter Avg</span></div>
<div class="r" style="left:579px;top:421px;width:158px;height:1px;background:#808080"></div>
<div class="r" style="left:580px;top:422px;width:157px;height:1px;background:#fff"></div>
<div class="r" style="left:579px;top:421px;width:1px;height:123px;background:#808080"></div>
<div class="r" style="left:580px;top:422px;width:1px;height:122px;background:#fff"></div>
<div class="r" style="left:579px;top:543px;width:158px;height:1px;background:#808080"></div>
<div class="r" style="left:579px;top:544px;width:159px;height:1px;background:#fff"></div>
<div class="r" style="left:736px;top:421px;width:1px;height:123px;background:#808080"></div>
<div class="r" style="left:737px;top:421px;width:1px;height:124px;background:#fff"></div>
<div class="r" style="left:584px;top:415px;width:110px;height:12px;background:#d4d0c8"></div>
<div class="t c" style="left:587px;top:415px;"><span style="display:inline-block;transform:scaleX(0.97);transform-origin:0 0">Snapshot &amp; Clipboard</span></div>
<svg width="753" height="566" shape-rendering="crispEdges">
<rect x="619" y="467" width="1" height="1" fill="#b0b0b0"/>
<rect x="620" y="467" width="2" height="3" fill="#505050"/>
<rect x="625" y="469" width="1" height="1" fill="#909090"/>
<rect x="617" y="470" width="24" height="15" fill="#f0f0f0"/>
<rect x="618" y="485" width="24" height="1" fill="#5a5a5a"/>
<rect x="641" y="471" width="1" height="15" fill="#5a5a5a"/>
<path d="M618 472h1v1h-1zM618 474h1v1h-1zM618 476h1v1h-1zM618 478h1v1h-1zM618 480h1v1h-1zM618 482h1v1h-1zM618 484h1v1h-1zM619 473h1v1h-1zM619 475h1v1h-1zM619 477h1v1h-1zM619 479h1v1h-1zM619 481h1v1h-1zM619 483h1v1h-1zM620 472h1v1h-1zM620 474h1v1h-1zM620 476h1v1h-1zM620 478h1v1h-1zM620 480h1v1h-1zM620 482h1v1h-1zM620 484h1v1h-1zM621 473h1v1h-1zM621 475h1v1h-1zM621 477h1v1h-1zM621 479h1v1h-1zM621 481h1v1h-1zM621 483h1v1h-1zM622 472h1v1h-1zM622 474h1v1h-1zM622 476h1v1h-1zM622 478h1v1h-1zM622 480h1v1h-1zM622 482h1v1h-1zM622 484h1v1h-1zM636 472h1v1h-1zM636 474h1v1h-1zM636 476h1v1h-1zM636 478h1v1h-1zM636 480h1v1h-1zM636 482h1v1h-1zM636 484h1v1h-1zM637 473h1v1h-1zM637 475h1v1h-1zM637 477h1v1h-1zM637 479h1v1h-1zM637 481h1v1h-1zM637 483h1v1h-1zM638 472h1v1h-1zM638 474h1v1h-1zM638 476h1v1h-1zM638 478h1v1h-1zM638 480h1v1h-1zM638 482h1v1h-1zM638 484h1v1h-1zM639 473h1v1h-1zM639 475h1v1h-1zM639 477h1v1h-1zM639 479h1v1h-1zM639 481h1v1h-1zM639 483h1v1h-1zM640 472h1v1h-1zM640 474h1v1h-1zM640 476h1v1h-1zM640 478h1v1h-1zM640 480h1v1h-1zM640 482h1v1h-1zM640 484h1v1h-1z" fill="#b0b0b0"/>
</svg>
<svg width="753" height="566">
<circle cx="629.5" cy="477" r="5.2" fill="#8a8a8a"/>
<circle cx="629.5" cy="477" r="3.8" fill="#3c3c3c"/>
<circle cx="629.8" cy="477.3" r="2.6" fill="#1a1a1a"/>
<rect x="628" y="476" width="1.5" height="1.5" fill="#fff"/>
</svg>
<svg width="753" height="566">
<defs><linearGradient id="clipg" x1="0" y1="0" x2="0" y2="1"><stop offset="0" stop-color="#c88a52"/><stop offset="0.45" stop-color="#d9a46e"/><stop offset="0.55" stop-color="#c98e58"/><stop offset="1" stop-color="#b87a44"/></linearGradient></defs>
<rect x="674.5" y="466.5" width="17" height="21" rx="1.5" fill="url(#clipg)" stroke="#8a5222"/>
<path d="M680.5 464.5 h5 l1 2.5 h2.5 v3 h-12 v-3 h2.5 z" fill="#ececec" stroke="#6a6a6a" stroke-width="1"/>
<rect x="682" y="466" width="2" height="1" fill="#555"/>
<path d="M684.5 469.5 h8.5 l4.5 4.5 v11.5 h-13 z" fill="#f8f8f8" stroke="#6c6c6c"/>
<path d="M693 469.5 l4.5 4.5 h-4.5 z" fill="#4a9ae0"/>
<rect x="686" y="472" width="6" height="1" fill="#b8b8b8"/>
<rect x="686" y="475" width="9" height="1" fill="#b8b8b8"/>
<rect x="686" y="478" width="9" height="1" fill="#b8b8b8"/>
<rect x="686" y="481" width="9" height="1" fill="#b8b8b8"/>
</svg>
<div class="r" style="left:48px;top:495px;width:448px;height:23px;background:#000"></div>
<div class="r" style="left:48px;top:495px;width:448px;height:1px;background:#808080"></div>
<div class="r" style="left:48px;top:495px;width:1px;height:23px;background:#808080"></div>
<div class="r" style="left:49px;top:496px;width:446px;height:1px;background:#404040"></div>
<div class="r" style="left:49px;top:496px;width:1px;height:21px;background:#404040"></div>
<div class="r" style="left:48px;top:517px;width:448px;height:1px;background:#ffffff"></div>
<div class="r" style="left:495px;top:495px;width:1px;height:23px;background:#ffffff"></div>
<div class="r" style="left:49px;top:516px;width:446px;height:1px;background:#d4d0c8"></div>
<div class="r" style="left:494px;top:496px;width:1px;height:21px;background:#d4d0c8"></div>
<svg width="753" height="566" shape-rendering="crispEdges"><path d="M53 499h1v14h-1zM55 499h1v14h-1zM57 499h1v14h-1zM59 499h1v14h-1zM61 499h1v14h-1zM64 499h1v14h-1zM66 499h1v14h-1zM68 499h1v14h-1zM70 499h1v14h-1zM72 499h1v14h-1zM75 499h1v14h-1zM77 499h1v14h-1zM79 499h1v14h-1zM81 499h1v14h-1zM83 499h1v14h-1zM86 499h1v14h-1zM88 499h1v14h-1zM90 499h1v14h-1zM92 499h1v14h-1zM94 499h1v14h-1zM97 499h1v14h-1zM99 499h1v14h-1zM101 499h1v14h-1zM103 499h1v14h-1zM105 499h1v14h-1zM108 499h1v14h-1zM110 499h1v14h-1zM112 499h1v14h-1zM114 499h1v14h-1zM116 499h1v14h-1zM119 499h1v14h-1zM121 499h1v14h-1zM123 499h1v14h-1zM125 499h1v14h-1zM127 499h1v14h-1zM130 499h1v14h-1zM132 499h1v14h-1zM134 499h1v14h-1zM136 499h1v14h-1zM138 499h1v14h-1zM141 499h1v14h-1zM143 499h1v14h-1zM145 499h1v14h-1zM147 499h1v14h-1zM149 499h1v14h-1zM152 499h1v14h-1zM154 499h1v14h-1zM156 499h1v14h-1zM158 499h1v14h-1zM160 499h1v14h-1zM163 499h1v14h-1zM165 499h1v14h-1zM167 499h1v14h-1zM169 499h1v14h-1zM171 499h1v14h-1zM174 499h1v14h-1zM176 499h1v14h-1zM178 499h1v14h-1zM180 499h1v14h-1zM182 499h1v14h-1zM185 499h1v14h-1zM187 499h1v14h-1zM189 499h1v14h-1zM191 499h1v14h-1zM193 499h1v14h-1zM196 499h1v14h-1zM198 499h1v14h-1zM200 499h1v14h-1zM202 499h1v14h-1zM204 499h1v14h-1zM207 499h1v14h-1zM209 499h1v14h-1zM211 499h1v14h-1zM213 499h1v14h-1zM215 499h1v14h-1zM218 499h1v14h-1zM220 499h1v14h-1zM222 499h1v14h-1zM224 499h1v14h-1zM226 499h1v14h-1zM229 499h1v14h-1zM231 499h1v14h-1zM233 499h1v14h-1zM235 499h1v14h-1zM237 499h1v14h-1zM240 499h1v14h-1zM242 499h1v14h-1zM244 499h1v14h-1zM246 499h1v14h-1zM248 499h1v14h-1zM251 499h1v14h-1zM253 499h1v14h-1zM255 499h1v14h-1zM257 499h1v14h-1zM259 499h1v14h-1zM262 499h1v14h-1zM264 499h1v14h-1zM266 499h1v14h-1zM268 499h1v14h-1zM270 499h1v14h-1zM273 499h1v14h-1zM275 499h1v14h-1zM277 499h1v14h-1zM279 499h1v14h-1zM281 499h1v14h-1zM284 499h1v14h-1zM286 499h1v14h-1zM288 499h1v14h-1zM290 499h1v14h-1zM292 499h1v14h-1zM295 499h1v14h-1zM297 499h1v14h-1zM299 499h1v14h-1zM301 499h1v14h-1zM303 499h1v14h-1zM306 499h1v14h-1zM308 499h1v14h-1zM310 499h1v14h-1zM312 499h1v14h-1zM314 499h1v14h-1zM317 499h1v14h-1zM319 499h1v14h-1zM321 499h1v14h-1zM323 499h1v14h-1zM325 499h1v14h-1zM328 499h1v14h-1zM330 499h1v14h-1zM332 499h1v14h-1zM334 499h1v14h-1zM336 499h1v14h-1zM339 499h1v14h-1zM341 499h1v14h-1zM343 499h1v14h-1zM345 499h1v14h-1zM347 499h1v14h-1zM350 499h1v14h-1zM352 499h1v14h-1zM354 499h1v14h-1zM356 499h1v14h-1zM358 499h1v14h-1zM361 499h1v14h-1zM363 499h1v14h-1zM365 499h1v14h-1zM367 499h1v14h-1zM369 499h1v14h-1zM372 499h1v14h-1zM374 499h1v14h-1zM376 499h1v14h-1zM378 499h1v14h-1zM380 499h1v14h-1zM383 499h1v14h-1zM385 499h1v14h-1zM387 499h1v14h-1zM389 499h1v14h-1zM391 499h1v14h-1zM394 499h1v14h-1zM396 499h1v14h-1zM398 499h1v14h-1zM400 499h1v14h-1zM402 499h1v14h-1zM405 499h1v14h-1zM407 499h1v14h-1zM409 499h1v14h-1zM411 499h1v14h-1zM413 499h1v14h-1zM416 499h1v14h-1zM418 499h1v14h-1zM420 499h1v14h-1zM422 499h1v14h-1zM424 499h1v14h-1zM427 499h1v14h-1zM429 499h1v14h-1zM431 499h1v14h-1zM433 499h1v14h-1zM435 499h1v14h-1zM438 499h1v14h-1zM440 499h1v14h-1zM442 499h1v14h-1zM444 499h1v14h-1zM446 499h1v14h-1zM449 499h1v14h-1zM451 499h1v14h-1zM453 499h1v14h-1zM455 499h1v14h-1zM457 499h1v14h-1zM460 499h1v14h-1zM462 499h1v14h-1zM464 499h1v14h-1zM466 499h1v14h-1zM468 499h1v14h-1zM471 499h1v14h-1zM473 499h1v14h-1zM475 499h1v14h-1zM477 499h1v14h-1zM479 499h1v14h-1zM482 499h1v14h-1zM484 499h1v14h-1zM486 499h1v14h-1zM488 499h1v14h-1zM490 499h1v14h-1z" fill="#0b5566"/><path d="M53 499h1v2h-1zM55 499h1v2h-1zM57 499h1v2h-1zM57 501h1v2h-1zM57 503h1v2h-1zM57 505h1v2h-1zM57 507h1v2h-1zM57 509h1v2h-1zM57 511h1v2h-1zM59 499h1v2h-1zM61 499h1v2h-1zM64 505h1v2h-1zM64 507h1v2h-1zM64 509h1v2h-1zM66 503h1v2h-1zM66 507h1v2h-1zM66 511h1v2h-1zM68 503h1v2h-1zM68 507h1v2h-1zM68 511h1v2h-1zM70 503h1v2h-1zM70 507h1v2h-1zM70 511h1v2h-1zM72 505h1v2h-1zM72 507h1v2h-1zM75 505h1v2h-1zM75 511h1v2h-1zM77 503h1v2h-1zM77 507h1v2h-1zM77 511h1v2h-1zM79 503h1v2h-1zM79 507h1v2h-1zM79 511h1v2h-1zM81 503h1v2h-1zM81 507h1v2h-1zM81 511h1v2h-1zM83 509h1v2h-1zM86 503h1v2h-1zM88 499h1v2h-1zM88 501h1v2h-1zM88 503h1v2h-1zM88 505h1v2h-1zM88 507h1v2h-1zM88 509h1v2h-1zM90 503h1v2h-1zM90 511h1v2h-1zM92 511h1v2h-1zM94 509h1v2h-1zM108 501h1v2h-1zM108 503h1v2h-1zM108 505h1v2h-1zM108 507h1v2h-1zM108 509h1v2h-1zM110 499h1v2h-1zM110 511h1v2h-1zM112 499h1v2h-1zM112 511h1v2h-1zM114 499h1v2h-1zM114 511h1v2h-1zM116 501h1v2h-1zM116 509h1v2h-1zM119 505h1v2h-1zM119 507h1v2h-1zM119 509h1v2h-1zM121 503h1v2h-1zM121 511h1v2h-1zM123 503h1v2h-1zM123 511h1v2h-1zM125 503h1v2h-1zM125 511h1v2h-1zM127 505h1v2h-1zM127 507h1v2h-1zM127 509h1v2h-1zM130 503h1v2h-1zM130 505h1v2h-1zM130 507h1v2h-1zM130 509h1v2h-1zM130 511h1v2h-1zM132 503h1v2h-1zM134 505h1v2h-1zM134 507h1v2h-1zM136 503h1v2h-1zM138 505h1v2h-1zM138 507h1v2h-1zM138 509h1v2h-1zM138 511h1v2h-1zM141 503h1v2h-1zM141 505h1v2h-1zM141 507h1v2h-1zM141 509h1v2h-1zM141 511h1v2h-1zM143 503h1v2h-1zM143 507h1v2h-1zM145 503h1v2h-1zM145 507h1v2h-1zM147 503h1v2h-1zM147 507h1v2h-1zM149 505h1v2h-1zM154 499h1v2h-1zM154 511h1v2h-1zM156 499h1v2h-1zM156 501h1v2h-1zM156 503h1v2h-1zM156 505h1v2h-1zM156 507h1v2h-1zM156 509h1v2h-1zM156 511h1v2h-1zM158 511h1v2h-1zM163 505h1v2h-1zM163 507h1v2h-1zM163 509h1v2h-1zM165 503h1v2h-1zM165 507h1v2h-1zM165 511h1v2h-1zM167 503h1v2h-1zM167 507h1v2h-1zM167 511h1v2h-1zM169 503h1v2h-1zM169 507h1v2h-1zM169 511h1v2h-1zM171 505h1v2h-1zM171 507h1v2h-1zM174 503h1v2h-1zM176 499h1v2h-1zM176 501h1v2h-1zM176 503h1v2h-1zM176 505h1v2h-1zM176 507h1v2h-1zM176 509h1v2h-1zM178 503h1v2h-1zM178 511h1v2h-1zM180 511h1v2h-1zM182 509h1v2h-1zM185 505h1v2h-1zM185 507h1v2h-1zM185 509h1v2h-1zM187 503h1v2h-1zM187 507h1v2h-1zM187 511h1v2h-1zM189 503h1v2h-1zM189 507h1v2h-1zM189 511h1v2h-1zM191 503h1v2h-1zM191 507h1v2h-1zM191 511h1v2h-1zM193 505h1v2h-1zM193 507h1v2h-1zM209 503h1v2h-1zM209 511h1v2h-1zM211 499h1v2h-1zM211 503h1v2h-1zM211 505h1v2h-1zM211 507h1v2h-1zM211 509h1v2h-1zM211 511h1v2h-1zM213 511h1v2h-1zM218 503h1v2h-1zM218 505h1v2h-1zM218 507h1v2h-1zM218 509h1v2h-1zM218 511h1v2h-1zM220 505h1v2h-1zM222 503h1v2h-1zM224 503h1v2h-1zM226 505h1v2h-1zM226 507h1v2h-1zM226 509h1v2h-1zM226 511h1v2h-1zM240 501h1v2h-1zM240 503h1v2h-1zM240 505h1v2h-1zM240 507h1v2h-1zM240 509h1v2h-1zM242 499h1v2h-1zM242 507h1v2h-1zM242 511h1v2h-1zM244 499h1v2h-1zM244 505h1v2h-1zM244 511h1v2h-1zM246 499h1v2h-1zM246 503h1v2h-1zM246 511h1v2h-1zM248 501h1v2h-1zM248 503h1v2h-1zM248 505h1v2h-1zM248 507h1v2h-1zM248 509h1v2h-1zM251 501h1v2h-1zM251 503h1v2h-1zM253 499h1v2h-1zM253 505h1v2h-1zM253 511h1v2h-1zM255 499h1v2h-1zM255 505h1v2h-1zM255 511h1v2h-1zM257 499h1v2h-1zM257 505h1v2h-1zM257 509h1v2h-1zM259 501h1v2h-1zM259 503h1v2h-1zM259 505h1v2h-1zM259 507h1v2h-1zM264 501h1v2h-1zM264 503h1v2h-1zM264 507h1v2h-1zM264 509h1v2h-1zM266 501h1v2h-1zM266 503h1v2h-1zM266 507h1v2h-1zM266 509h1v2h-1zM273 499h1v2h-1zM273 509h1v2h-1zM275 499h1v2h-1zM275 511h1v2h-1zM277 499h1v2h-1zM277 503h1v2h-1zM277 511h1v2h-1zM279 499h1v2h-1zM279 501h1v2h-1zM279 505h1v2h-1zM279 511h1v2h-1zM281 499h1v2h-1zM281 507h1v2h-1zM281 509h1v2h-1zM284 499h1v2h-1zM284 501h1v2h-1zM284 503h1v2h-1zM284 509h1v2h-1zM286 499h1v2h-1zM286 503h1v2h-1zM286 511h1v2h-1zM288 499h1v2h-1zM288 503h1v2h-1zM288 511h1v2h-1zM290 499h1v2h-1zM290 503h1v2h-1zM290 511h1v2h-1zM292 499h1v2h-1zM292 505h1v2h-1zM292 507h1v2h-1zM292 509h1v2h-1z" fill="#12d4f4"/></svg>
<div class="r" style="left:48px;top:520px;width:448px;height:23px;background:#000"></div>
<div class="r" style="left:48px;top:520px;width:448px;height:1px;background:#808080"></div>
<div class="r" style="left:48px;top:520px;width:1px;height:23px;background:#808080"></div>
<div class="r" style="left:49px;top:521px;width:446px;height:1px;background:#404040"></div>
<div class="r" style="left:49px;top:521px;width:1px;height:21px;background:#404040"></div>
<div class="r" style="left:48px;top:542px;width:448px;height:1px;background:#ffffff"></div>
<div class="r" style="left:495px;top:520px;width:1px;height:23px;background:#ffffff"></div>
<div class="r" style="left:49px;top:541px;width:446px;height:1px;background:#d4d0c8"></div>
<div class="r" style="left:494px;top:521px;width:1px;height:21px;background:#d4d0c8"></div>
<svg width="753" height="566" shape-rendering="crispEdges"><path d="M53 524h1v14h-1zM55 524h1v14h-1zM57 524h1v14h-1zM59 524h1v14h-1zM61 524h1v14h-1zM64 524h1v14h-1zM66 524h1v14h-1zM68 524h1v14h-1zM70 524h1v14h-1zM72 524h1v14h-1zM75 524h1v14h-1zM77 524h1v14h-1zM79 524h1v14h-1zM81 524h1v14h-1zM83 524h1v14h-1zM86 524h1v14h-1zM88 524h1v14h-1zM90 524h1v14h-1zM92 524h1v14h-1zM94 524h1v14h-1zM97 524h1v14h-1zM99 524h1v14h-1zM101 524h1v14h-1zM103 524h1v14h-1zM105 524h1v14h-1zM108 524h1v14h-1zM110 524h1v14h-1zM112 524h1v14h-1zM114 524h1v14h-1zM116 524h1v14h-1zM119 524h1v14h-1zM121 524h1v14h-1zM123 524h1v14h-1zM125 524h1v14h-1zM127 524h1v14h-1zM130 524h1v14h-1zM132 524h1v14h-1zM134 524h1v14h-1zM136 524h1v14h-1zM138 524h1v14h-1zM141 524h1v14h-1zM143 524h1v14h-1zM145 524h1v14h-1zM147 524h1v14h-1zM149 524h1v14h-1zM152 524h1v14h-1zM154 524h1v14h-1zM156 524h1v14h-1zM158 524h1v14h-1zM160 524h1v14h-1zM163 524h1v14h-1zM165 524h1v14h-1zM167 524h1v14h-1zM169 524h1v14h-1zM171 524h1v14h-1zM174 524h1v14h-1zM176 524h1v14h-1zM178 524h1v14h-1zM180 524h1v14h-1zM182 524h1v14h-1zM185 524h1v14h-1zM187 524h1v14h-1zM189 524h1v14h-1zM191 524h1v14h-1zM193 524h1v14h-1zM196 524h1v14h-1zM198 524h1v14h-1zM200 524h1v14h-1zM202 524h1v14h-1zM204 524h1v14h-1zM207 524h1v14h-1zM209 524h1v14h-1zM211 524h1v14h-1zM213 524h1v14h-1zM215 524h1v14h-1zM218 524h1v14h-1zM220 524h1v14h-1zM222 524h1v14h-1zM224 524h1v14h-1zM226 524h1v14h-1zM229 524h1v14h-1zM231 524h1v14h-1zM233 524h1v14h-1zM235 524h1v14h-1zM237 524h1v14h-1zM240 524h1v14h-1zM242 524h1v14h-1zM244 524h1v14h-1zM246 524h1v14h-1zM248 524h1v14h-1zM251 524h1v14h-1zM253 524h1v14h-1zM255 524h1v14h-1zM257 524h1v14h-1zM259 524h1v14h-1zM262 524h1v14h-1zM264 524h1v14h-1zM266 524h1v14h-1zM268 524h1v14h-1zM270 524h1v14h-1zM273 524h1v14h-1zM275 524h1v14h-1zM277 524h1v14h-1zM279 524h1v14h-1zM281 524h1v14h-1zM284 524h1v14h-1zM286 524h1v14h-1zM288 524h1v14h-1zM290 524h1v14h-1zM292 524h1v14h-1zM295 524h1v14h-1zM297 524h1v14h-1zM299 524h1v14h-1zM301 524h1v14h-1zM303 524h1v14h-1zM306 524h1v14h-1zM308 524h1v14h-1zM310 524h1v14h-1zM312 524h1v14h-1zM314 524h1v14h-1zM317 524h1v14h-1zM319 524h1v14h-1zM321 524h1v14h-1zM323 524h1v14h-1zM325 524h1v14h-1zM328 524h1v14h-1zM330 524h1v14h-1zM332 524h1v14h-1zM334 524h1v14h-1zM336 524h1v14h-1zM339 524h1v14h-1zM341 524h1v14h-1zM343 524h1v14h-1zM345 524h1v14h-1zM347 524h1v14h-1zM350 524h1v14h-1zM352 524h1v14h-1zM354 524h1v14h-1zM356 524h1v14h-1zM358 524h1v14h-1zM361 524h1v14h-1zM363 524h1v14h-1zM365 524h1v14h-1zM367 524h1v14h-1zM369 524h1v14h-1zM372 524h1v14h-1zM374 524h1v14h-1zM376 524h1v14h-1zM378 524h1v14h-1zM380 524h1v14h-1zM383 524h1v14h-1zM385 524h1v14h-1zM387 524h1v14h-1zM389 524h1v14h-1zM391 524h1v14h-1zM394 524h1v14h-1zM396 524h1v14h-1zM398 524h1v14h-1zM400 524h1v14h-1zM402 524h1v14h-1zM405 524h1v14h-1zM407 524h1v14h-1zM409 524h1v14h-1zM411 524h1v14h-1zM413 524h1v14h-1zM416 524h1v14h-1zM418 524h1v14h-1zM420 524h1v14h-1zM422 524h1v14h-1zM424 524h1v14h-1zM427 524h1v14h-1zM429 524h1v14h-1zM431 524h1v14h-1zM433 524h1v14h-1zM435 524h1v14h-1zM438 524h1v14h-1zM440 524h1v14h-1zM442 524h1v14h-1zM444 524h1v14h-1zM446 524h1v14h-1zM449 524h1v14h-1zM451 524h1v14h-1zM453 524h1v14h-1zM455 524h1v14h-1zM457 524h1v14h-1zM460 524h1v14h-1zM462 524h1v14h-1zM464 524h1v14h-1zM466 524h1v14h-1zM468 524h1v14h-1zM471 524h1v14h-1zM473 524h1v14h-1zM475 524h1v14h-1zM477 524h1v14h-1zM479 524h1v14h-1zM482 524h1v14h-1zM484 524h1v14h-1zM486 524h1v14h-1zM488 524h1v14h-1zM490 524h1v14h-1z" fill="#0b5566"/><path d="M53 524h1v2h-1zM55 524h1v2h-1zM57 524h1v2h-1zM57 526h1v2h-1zM57 528h1v2h-1zM57 530h1v2h-1zM57 532h1v2h-1zM57 534h1v2h-1zM57 536h1v2h-1zM59 524h1v2h-1zM61 524h1v2h-1zM64 530h1v2h-1zM64 532h1v2h-1zM64 534h1v2h-1zM66 528h1v2h-1zM66 532h1v2h-1zM66 536h1v2h-1zM68 528h1v2h-1zM68 532h1v2h-1zM68 536h1v2h-1zM70 528h1v2h-1zM70 532h1v2h-1zM70 536h1v2h-1zM72 530h1v2h-1zM72 532h1v2h-1zM75 530h1v2h-1zM75 536h1v2h-1zM77 528h1v2h-1zM77 532h1v2h-1zM77 536h1v2h-1zM79 528h1v2h-1zM79 532h1v2h-1zM79 536h1v2h-1zM81 528h1v2h-1zM81 532h1v2h-1zM81 536h1v2h-1zM83 534h1v2h-1zM86 528h1v2h-1zM88 524h1v2h-1zM88 526h1v2h-1zM88 528h1v2h-1zM88 530h1v2h-1zM88 532h1v2h-1zM88 534h1v2h-1zM90 528h1v2h-1zM90 536h1v2h-1zM92 536h1v2h-1zM94 534h1v2h-1zM108 526h1v2h-1zM108 528h1v2h-1zM108 530h1v2h-1zM108 532h1v2h-1zM108 534h1v2h-1zM110 524h1v2h-1zM110 536h1v2h-1zM112 524h1v2h-1zM112 536h1v2h-1zM114 524h1v2h-1zM114 536h1v2h-1zM116 526h1v2h-1zM116 534h1v2h-1zM119 530h1v2h-1zM119 532h1v2h-1zM119 534h1v2h-1zM121 528h1v2h-1zM121 536h1v2h-1zM123 528h1v2h-1zM123 536h1v2h-1zM125 528h1v2h-1zM125 536h1v2h-1zM127 530h1v2h-1zM127 532h1v2h-1zM127 534h1v2h-1zM130 528h1v2h-1zM130 530h1v2h-1zM130 532h1v2h-1zM130 534h1v2h-1zM130 536h1v2h-1zM132 528h1v2h-1zM134 530h1v2h-1zM134 532h1v2h-1zM136 528h1v2h-1zM138 530h1v2h-1zM138 532h1v2h-1zM138 534h1v2h-1zM138 536h1v2h-1zM141 528h1v2h-1zM141 530h1v2h-1zM141 532h1v2h-1zM141 534h1v2h-1zM141 536h1v2h-1zM143 528h1v2h-1zM143 532h1v2h-1zM145 528h1v2h-1zM145 532h1v2h-1zM147 528h1v2h-1zM147 532h1v2h-1zM149 530h1v2h-1zM154 524h1v2h-1zM154 536h1v2h-1zM156 524h1v2h-1zM156 526h1v2h-1zM156 528h1v2h-1zM156 530h1v2h-1zM156 532h1v2h-1zM156 534h1v2h-1zM156 536h1v2h-1zM158 536h1v2h-1zM163 530h1v2h-1zM163 532h1v2h-1zM163 534h1v2h-1zM165 528h1v2h-1zM165 532h1v2h-1zM165 536h1v2h-1zM167 528h1v2h-1zM167 532h1v2h-1zM167 536h1v2h-1zM169 528h1v2h-1zM169 532h1v2h-1zM169 536h1v2h-1zM171 530h1v2h-1zM171 532h1v2h-1zM174 528h1v2h-1zM176 524h1v2h-1zM176 526h1v2h-1zM176 528h1v2h-1zM176 530h1v2h-1zM176 532h1v2h-1zM176 534h1v2h-1zM178 528h1v2h-1zM178 536h1v2h-1zM180 536h1v2h-1zM182 534h1v2h-1zM185 530h1v2h-1zM185 532h1v2h-1zM185 534h1v2h-1zM187 528h1v2h-1zM187 532h1v2h-1zM187 536h1v2h-1zM189 528h1v2h-1zM189 532h1v2h-1zM189 536h1v2h-1zM191 528h1v2h-1zM191 532h1v2h-1zM191 536h1v2h-1zM193 530h1v2h-1zM193 532h1v2h-1z" fill="#12d4f4"/></svg>
<div class="t c" style="left:-76.0px;top:495px;width:200px;text-align:center;"><span style="display:inline-block;transform:scaleX(0.97);transform-origin:50% 0">Burn</span></div>
<div class="t c" style="left:-76.3px;top:508px;width:200px;text-align:center;"><span style="display:inline-block;transform:scaleX(0.97);transform-origin:50% 0">Drive 1</span></div>
<div class="t c" style="left:-76.0px;top:519px;width:200px;text-align:center;"><span style="display:inline-block;transform:scaleX(0.97);transform-origin:50% 0">Burn</span></div>
<div class="t c" style="left:-76.3px;top:533px;width:200px;text-align:center;"><span style="display:inline-block;transform:scaleX(0.97);transform-origin:50% 0">Drive 2</span></div>
<div class="r" style="left:503px;top:494px;width:65px;height:21px;background:#d4d0c8"></div>
<div class="r" style="left:503px;top:494px;width:65px;height:1px;background:#ffffff"></div>
<div class="r" style="left:503px;top:494px;width:1px;height:21px;background:#ffffff"></div>
<div class="r" style="left:503px;top:514px;width:65px;height:1px;background:#404040"></div>
<div class="r" style="left:567px;top:494px;width:1px;height:21px;background:#404040"></div>
<div class="r" style="left:504px;top:513px;width:63px;height:1px;background:#808080"></div>
<div class="r" style="left:566px;top:495px;width:1px;height:19px;background:#808080"></div>
<div class="t c" style="left:435.0px;top:498px;width:200px;text-align:center;"><span style="display:inline-block;transform:scaleX(0.94);transform-origin:50% 0">Comment</span></div>
<div class="r" style="left:503px;top:522px;width:65px;height:21px;background:#d4d0c8"></div>
<div class="r" style="left:503px;top:522px;width:65px;height:1px;background:#ffffff"></div>
<div class="r" style="left:503px;top:522px;width:1px;height:21px;background:#ffffff"></div>
<div class="r" style="left:503px;top:542px;width:65px;height:1px;background:#404040"></div>
<div class="r" style="left:567px;top:522px;width:1px;height:21px;background:#404040"></div>
<div class="r" style="left:504px;top:541px;width:63px;height:1px;background:#808080"></div>
<div class="r" style="left:566px;top:523px;width:1px;height:19px;background:#808080"></div>
<div class="t c" style="left:435.0px;top:526px;width:200px;text-align:center;"><span style="display:inline-block;transform:scaleX(0.94);transform-origin:50% 0">Comment</span></div>
<svg width="753" height="566"><defs>
<linearGradient id="disc" x1="0.15" y1="0.85" x2="0.85" y2="0.15"><stop offset="0" stop-color="#000" stop-opacity="0.07"/><stop offset="0.6" stop-color="#fff" stop-opacity="0.18"/><stop offset="1" stop-color="#fff" stop-opacity="0.28"/></linearGradient>
</defs>
<circle cx="38.8" cy="526.6" r="17.6" fill="url(#disc)" stroke="#8c887f" stroke-opacity="0.35" stroke-width="1"/>
<circle cx="39.4" cy="526.7" r="7" fill="#ffffff" fill-opacity="0.45"/>
<circle cx="39.4" cy="526.7" r="3.4" fill="#a8a49c" fill-opacity="0.55"/>
</svg>
<div class="t" style="left:2px;top:548px;font-size:19px;line-height:18px;font-weight:bold;color:#e0ddd6;-webkit-text-stroke:0.6px #e0ddd6;transform:scaleX(0.61);transform-origin:left top;letter-spacing:0.5px">CDRLabs.com</div>
</body></html>
